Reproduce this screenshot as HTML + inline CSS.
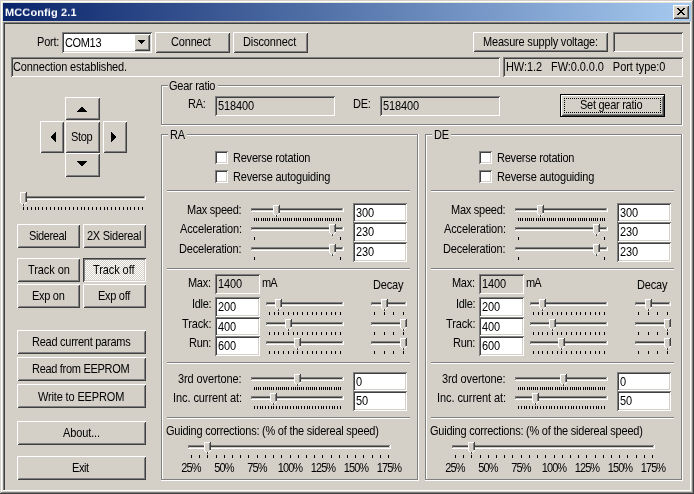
<!DOCTYPE html>
<html><head><meta charset="utf-8"><title>MCConfig 2.1</title><style>
html,body{margin:0;padding:0;}
body{width:694px;height:494px;overflow:hidden;background:#D4D0C8;position:relative;font-family:"Liberation Sans",sans-serif;font-size:11px;color:#000;line-height:13px;}
#w{position:absolute;left:0;top:0;width:694px;height:494px;overflow:hidden;}
#w div,#w svg,#w span.t{position:absolute;box-sizing:border-box;}
#w span.t{white-space:pre;will-change:transform;transform:scaleY(1.08);transform-origin:50% 15%;}
#w .btn>span,#w .sunk>span,#w .sunkbtn>span{display:inline-block;will-change:transform;transform:scaleY(1.08);transform-origin:50% 15%;}
#w .btn{background:#D4D0C8;display:flex;align-items:center;justify-content:center;white-space:pre;
 box-shadow:inset 1px 1px 0 #FFFFFF,inset -1px -1px 0 #404040,inset 2px 2px 0 #D4D0C8,inset -2px -2px 0 #808080;}
#w .sunk{display:flex;align-items:center;justify-content:flex-start;padding-left:3px;white-space:pre;
 box-shadow:inset 1px 1px 0 #808080,inset -1px -1px 0 #FFFFFF,inset 2px 2px 0 #404040,inset -2px -2px 0 #D4D0C8;}
#w .sunkbtn{display:flex;align-items:center;justify-content:center;white-space:pre;background-color:#EAE8E4;
 background-image:conic-gradient(#FFFFFF 25%,#D4D0C8 0 50%,#FFFFFF 0 75%,#D4D0C8 0);background-size:2px 2px;
 box-shadow:inset 1px 1px 0 #404040,inset -1px -1px 0 #FFFFFF,inset 2px 2px 0 #808080,inset -2px -2px 0 #D4D0C8;}
</style></head>
<body><div id="w">
<div style="left:0px;top:0px;width:694px;height:494px;background:#D4D0C8;"></div>
<div style="left:1px;top:1px;width:691px;height:1px;background:#FFFFFF;"></div>
<div style="left:1px;top:1px;width:1px;height:491px;background:#FFFFFF;"></div>
<div style="left:2px;top:2px;width:689px;height:1px;background:#E4E1DB;"></div>
<div style="left:2px;top:2px;width:1px;height:489px;background:#E4E1DB;"></div>
<div style="left:692px;top:1px;width:1px;height:492px;background:#808080;"></div>
<div style="left:1px;top:492px;width:692px;height:1px;background:#808080;"></div>
<div style="left:693px;top:0px;width:1px;height:494px;background:#404040;"></div>
<div style="left:0px;top:493px;width:694px;height:1px;background:#404040;"></div>
<div style="left:3px;top:3px;width:688px;height:18px;background:linear-gradient(to right,#0A246A,#A6CAF0);"></div>
<span class="t" style="left:5px;top:6px;color:#fff;font-weight:bold;letter-spacing:0.12px;transform:scaleY(0.93);transform-origin:50% 77%">MCConfig 2.1</span>
<div class="btn " style="left:673px;top:5px;width:16px;height:14px;"></div>
<svg style="left:677px;top:8px" width="8" height="7" viewBox="0 0 8 7" shape-rendering="crispEdges"><rect x="0" y="0" width="2" height="1" fill="#000000"/><rect x="6" y="0" width="2" height="1" fill="#000000"/><rect x="1" y="1" width="2" height="1" fill="#000000"/><rect x="5" y="1" width="2" height="1" fill="#000000"/><rect x="2" y="2" width="4" height="1" fill="#000000"/><rect x="3" y="3" width="2" height="1" fill="#000000"/><rect x="2" y="4" width="4" height="1" fill="#000000"/><rect x="1" y="5" width="2" height="1" fill="#000000"/><rect x="5" y="5" width="2" height="1" fill="#000000"/><rect x="0" y="6" width="2" height="1" fill="#000000"/><rect x="6" y="6" width="2" height="1" fill="#000000"/></svg>
<div style="left:3px;top:22px;width:688px;height:1px;background:#808080;"></div>
<div style="left:3px;top:22px;width:1px;height:469px;background:#808080;"></div>
<div style="left:4px;top:23px;width:686px;height:1px;background:#404040;"></div>
<div style="left:4px;top:23px;width:1px;height:467px;background:#404040;"></div>
<div style="left:690px;top:22px;width:1px;height:469px;background:#FFFFFF;"></div>
<div style="left:3px;top:490px;width:688px;height:1px;background:#FFFFFF;"></div>
<span class="t" style="top:35px;letter-spacing:-0.2px;left:37px;">Port:</span>
<div class="sunk" style="left:62px;top:32px;width:90px;height:21px;background-color:#FFFFFF;padding-left:3px;"><span style="letter-spacing:-0.35px">COM13</span></div>
<div class="btn " style="left:134px;top:34px;width:16px;height:17px;"></div>
<svg style="left:138px;top:40px" width="7" height="4" viewBox="0 0 7 4" shape-rendering="crispEdges"><rect x="0" y="0" width="7" height="1" fill="#000000"/><rect x="1" y="1" width="5" height="1" fill="#000000"/><rect x="2" y="2" width="3" height="1" fill="#000000"/><rect x="3" y="3" width="1" height="1" fill="#000000"/></svg>
<div class="btn " style="left:155px;top:32px;width:75px;height:21px;"><span style="letter-spacing:-0.18px;position:relative;top:-1px;left:-2px">Connect</span></div>
<div class="btn " style="left:233px;top:32px;width:75px;height:21px;"><span style="letter-spacing:-0.13px;position:relative;top:-1px;left:-1px">Disconnect</span></div>
<div class="btn " style="left:473px;top:32px;width:135px;height:20px;"><span style="letter-spacing:-0.19px;position:relative;top:-1px;left:0px">Measure supply voltage:</span></div>
<div class="sunk" style="left:613px;top:32px;width:70px;height:20px;background-color:#D4D0C8;"></div>
<div class="sunk" style="left:11px;top:57px;width:489px;height:20px;background-color:#D4D0C8;padding-left:2px;"><span style="letter-spacing:-0.15px;position:relative;top:-1px">Connection established.</span></div>
<div class="sunk" style="left:503px;top:57px;width:180px;height:20px;background-color:#D4D0C8;padding-left:3px;"><span style="letter-spacing:-0.07px;white-space:pre;position:relative;top:-1px">HW:1.2   FW:0.0.0.0   Port type:0</span></div>
<div style="left:161px;top:85px;width:7px;height:1px;background:#808080;"></div>
<div style="left:162px;top:86px;width:6px;height:1px;background:#FFFFFF;"></div>
<div style="left:218px;top:85px;width:464px;height:1px;background:#808080;"></div>
<div style="left:218px;top:86px;width:463px;height:1px;background:#FFFFFF;"></div>
<div style="left:161px;top:85px;width:1px;height:40px;background:#808080;"></div>
<div style="left:162px;top:86px;width:1px;height:38px;background:#FFFFFF;"></div>
<div style="left:161px;top:124px;width:521px;height:1px;background:#808080;"></div>
<div style="left:161px;top:125px;width:522px;height:1px;background:#FFFFFF;"></div>
<div style="left:681px;top:85px;width:1px;height:40px;background:#808080;"></div>
<div style="left:682px;top:85px;width:1px;height:41px;background:#FFFFFF;"></div>
<span class="t" style="top:79px;letter-spacing:-0.27px;left:169px;">Gear ratio</span>
<span class="t" style="top:97px;letter-spacing:-0.3px;left:188px;">RA:</span>
<div class="sunk" style="left:215px;top:96px;width:120px;height:20px;background-color:#D4D0C8;padding-left:3px;"><span style="letter-spacing:-0.1px;position:relative;top:-1px">518400</span></div>
<span class="t" style="top:97px;letter-spacing:-0.3px;left:353px;">DE:</span>
<div class="sunk" style="left:380px;top:96px;width:120px;height:20px;background-color:#D4D0C8;padding-left:3px;"><span style="letter-spacing:-0.1px;position:relative;top:-1px">518400</span></div>
<div style="left:560px;top:94px;width:105px;height:23px;background:#000000;"></div>
<div class="btn " style="left:561px;top:95px;width:103px;height:21px;"><span style="letter-spacing:-0.27px;position:relative;top:-1px;left:-1px">Set gear ratio</span></div>
<div style="left:564px;top:98px;width:97px;height:15px;border:1px dotted #000;box-sizing:border-box"></div>
<div class="btn " style="left:65px;top:97px;width:35px;height:23px;"></div>
<svg style="left:77px;top:107px" width="10" height="5" viewBox="0 0 10 5" shape-rendering="crispEdges"><rect x="4" y="0" width="2" height="1" fill="#000000"/><rect x="3" y="1" width="4" height="1" fill="#000000"/><rect x="2" y="2" width="6" height="1" fill="#000000"/><rect x="1" y="3" width="8" height="1" fill="#000000"/><rect x="0" y="4" width="10" height="1" fill="#000000"/></svg>
<div class="btn " style="left:40px;top:121px;width:24px;height:32px;"></div>
<svg style="left:51px;top:132px" width="5" height="10" viewBox="0 0 5 10" shape-rendering="crispEdges"><rect x="4" y="0" width="1" height="1" fill="#000000"/><rect x="3" y="1" width="2" height="1" fill="#000000"/><rect x="2" y="2" width="3" height="1" fill="#000000"/><rect x="1" y="3" width="4" height="1" fill="#000000"/><rect x="0" y="4" width="5" height="1" fill="#000000"/><rect x="0" y="5" width="5" height="1" fill="#000000"/><rect x="1" y="6" width="4" height="1" fill="#000000"/><rect x="2" y="7" width="3" height="1" fill="#000000"/><rect x="3" y="8" width="2" height="1" fill="#000000"/><rect x="4" y="9" width="1" height="1" fill="#000000"/></svg>
<div class="btn " style="left:65px;top:121px;width:35px;height:32px;"><span style="letter-spacing:-0.35px;position:relative;top:-1px;left:-1px">Stop</span></div>
<div class="btn " style="left:103px;top:121px;width:24px;height:32px;"></div>
<svg style="left:111px;top:132px" width="5" height="10" viewBox="0 0 5 10" shape-rendering="crispEdges"><rect x="0" y="0" width="1" height="1" fill="#000000"/><rect x="0" y="1" width="2" height="1" fill="#000000"/><rect x="0" y="2" width="3" height="1" fill="#000000"/><rect x="0" y="3" width="4" height="1" fill="#000000"/><rect x="0" y="4" width="5" height="1" fill="#000000"/><rect x="0" y="5" width="5" height="1" fill="#000000"/><rect x="0" y="6" width="4" height="1" fill="#000000"/><rect x="0" y="7" width="3" height="1" fill="#000000"/><rect x="0" y="8" width="2" height="1" fill="#000000"/><rect x="0" y="9" width="1" height="1" fill="#000000"/></svg>
<div class="btn " style="left:65px;top:153px;width:35px;height:24px;"></div>
<svg style="left:77px;top:161px" width="10" height="5" viewBox="0 0 10 5" shape-rendering="crispEdges"><rect x="0" y="0" width="10" height="1" fill="#000000"/><rect x="1" y="1" width="8" height="1" fill="#000000"/><rect x="2" y="2" width="6" height="1" fill="#000000"/><rect x="3" y="3" width="4" height="1" fill="#000000"/><rect x="4" y="4" width="2" height="1" fill="#000000"/></svg>
<div style="left:21px;top:196px;width:125px;height:1px;background:#808080;"></div>
<div style="left:21px;top:197px;width:124px;height:1px;background:#404040;"></div>
<div style="left:21px;top:198px;width:124px;height:1px;background:#D4D0C8;"></div>
<div style="left:21px;top:199px;width:125px;height:1px;background:#FFFFFF;"></div>
<div style="left:21px;top:196px;width:1px;height:3px;background:#808080;"></div>
<div style="left:145px;top:196px;width:1px;height:4px;background:#FFFFFF;"></div>
<div style="left:144px;top:197px;width:1px;height:2px;background:#D4D0C8;"></div>
<div style="left:23px;top:207px;width:1px;height:3px;background:#000000;"></div>
<div style="left:27px;top:207px;width:1px;height:3px;background:#000000;"></div>
<div style="left:31px;top:207px;width:1px;height:3px;background:#000000;"></div>
<div style="left:35px;top:207px;width:1px;height:3px;background:#000000;"></div>
<div style="left:38px;top:207px;width:1px;height:3px;background:#000000;"></div>
<div style="left:42px;top:207px;width:1px;height:3px;background:#000000;"></div>
<div style="left:46px;top:207px;width:1px;height:3px;background:#000000;"></div>
<div style="left:50px;top:207px;width:1px;height:3px;background:#000000;"></div>
<div style="left:54px;top:207px;width:1px;height:3px;background:#000000;"></div>
<div style="left:58px;top:207px;width:1px;height:3px;background:#000000;"></div>
<div style="left:61px;top:207px;width:1px;height:3px;background:#000000;"></div>
<div style="left:65px;top:207px;width:1px;height:3px;background:#000000;"></div>
<div style="left:69px;top:207px;width:1px;height:3px;background:#000000;"></div>
<div style="left:73px;top:207px;width:1px;height:3px;background:#000000;"></div>
<div style="left:77px;top:207px;width:1px;height:3px;background:#000000;"></div>
<div style="left:81px;top:207px;width:1px;height:3px;background:#000000;"></div>
<div style="left:84px;top:207px;width:1px;height:3px;background:#000000;"></div>
<div style="left:88px;top:207px;width:1px;height:3px;background:#000000;"></div>
<div style="left:92px;top:207px;width:1px;height:3px;background:#000000;"></div>
<div style="left:96px;top:207px;width:1px;height:3px;background:#000000;"></div>
<div style="left:100px;top:207px;width:1px;height:3px;background:#000000;"></div>
<div style="left:104px;top:207px;width:1px;height:3px;background:#000000;"></div>
<div style="left:107px;top:207px;width:1px;height:3px;background:#000000;"></div>
<div style="left:111px;top:207px;width:1px;height:3px;background:#000000;"></div>
<div style="left:115px;top:207px;width:1px;height:3px;background:#000000;"></div>
<div style="left:119px;top:207px;width:1px;height:3px;background:#000000;"></div>
<div style="left:123px;top:207px;width:1px;height:3px;background:#000000;"></div>
<div style="left:127px;top:207px;width:1px;height:3px;background:#000000;"></div>
<div style="left:130px;top:207px;width:1px;height:3px;background:#000000;"></div>
<div style="left:134px;top:207px;width:1px;height:3px;background:#000000;"></div>
<div style="left:138px;top:207px;width:1px;height:3px;background:#000000;"></div>
<div style="left:142px;top:207px;width:1px;height:3px;background:#000000;"></div>
<svg style="left:20px;top:192px" width="7" height="14" viewBox="0 0 7 14" shape-rendering="crispEdges"><rect x="0" y="0" width="6" height="1" fill="#FFFFFF"/><rect x="6" y="0" width="1" height="1" fill="#404040"/><rect x="0" y="1" width="1" height="1" fill="#FFFFFF"/><rect x="1" y="1" width="4" height="1" fill="#D4D0C8"/><rect x="5" y="1" width="1" height="1" fill="#808080"/><rect x="6" y="1" width="1" height="1" fill="#404040"/><rect x="0" y="2" width="1" height="1" fill="#FFFFFF"/><rect x="1" y="2" width="4" height="1" fill="#D4D0C8"/><rect x="5" y="2" width="1" height="1" fill="#808080"/><rect x="6" y="2" width="1" height="1" fill="#404040"/><rect x="0" y="3" width="1" height="1" fill="#FFFFFF"/><rect x="1" y="3" width="4" height="1" fill="#D4D0C8"/><rect x="5" y="3" width="1" height="1" fill="#808080"/><rect x="6" y="3" width="1" height="1" fill="#404040"/><rect x="0" y="4" width="1" height="1" fill="#FFFFFF"/><rect x="1" y="4" width="4" height="1" fill="#D4D0C8"/><rect x="5" y="4" width="1" height="1" fill="#808080"/><rect x="6" y="4" width="1" height="1" fill="#404040"/><rect x="0" y="5" width="1" height="1" fill="#FFFFFF"/><rect x="1" y="5" width="4" height="1" fill="#D4D0C8"/><rect x="5" y="5" width="1" height="1" fill="#808080"/><rect x="6" y="5" width="1" height="1" fill="#404040"/><rect x="0" y="6" width="1" height="1" fill="#FFFFFF"/><rect x="1" y="6" width="4" height="1" fill="#D4D0C8"/><rect x="5" y="6" width="1" height="1" fill="#808080"/><rect x="6" y="6" width="1" height="1" fill="#404040"/><rect x="0" y="7" width="1" height="1" fill="#FFFFFF"/><rect x="1" y="7" width="4" height="1" fill="#D4D0C8"/><rect x="5" y="7" width="1" height="1" fill="#808080"/><rect x="6" y="7" width="1" height="1" fill="#404040"/><rect x="0" y="8" width="1" height="1" fill="#FFFFFF"/><rect x="1" y="8" width="4" height="1" fill="#D4D0C8"/><rect x="5" y="8" width="1" height="1" fill="#808080"/><rect x="6" y="8" width="1" height="1" fill="#404040"/><rect x="0" y="9" width="1" height="1" fill="#FFFFFF"/><rect x="1" y="9" width="4" height="1" fill="#D4D0C8"/><rect x="5" y="9" width="1" height="1" fill="#808080"/><rect x="6" y="9" width="1" height="1" fill="#404040"/><rect x="0" y="10" width="1" height="1" fill="#FFFFFF"/><rect x="1" y="10" width="5" height="1" fill="#D4D0C8"/><rect x="6" y="10" width="1" height="1" fill="#FFFFFF"/><rect x="1" y="11" width="1" height="1" fill="#FFFFFF"/><rect x="2" y="11" width="3" height="1" fill="#D4D0C8"/><rect x="5" y="11" width="1" height="1" fill="#FFFFFF"/><rect x="2" y="12" width="1" height="1" fill="#FFFFFF"/><rect x="3" y="12" width="1" height="1" fill="#404040"/><rect x="4" y="12" width="1" height="1" fill="#FFFFFF"/><rect x="3" y="13" width="1" height="1" fill="#404040"/></svg>
<div class="btn " style="left:17px;top:224px;width:63px;height:24px;"><span style="letter-spacing:-0.38px;position:relative;top:-1px;left:-1px">Sidereal</span></div>
<div class="btn " style="left:83px;top:224px;width:63px;height:24px;"><span style="letter-spacing:-0.25px;position:relative;top:-1px;left:0px">2X Sidereal</span></div>
<div class="btn " style="left:17px;top:258px;width:63px;height:24px;"><span style="letter-spacing:-0.08px;position:relative;top:-1px;left:0px">Track on</span></div>
<div class="sunkbtn" style="left:83px;top:258px;width:63px;height:24px"><span style="letter-spacing:-0.09px;position:relative;left:-1px;top:-1px">Track off</span></div>
<div class="btn " style="left:17px;top:284px;width:63px;height:24px;"><span style="letter-spacing:-0.3px;position:relative;top:-1px;left:0px">Exp on</span></div>
<div class="btn " style="left:83px;top:284px;width:63px;height:24px;"><span style="letter-spacing:-0.3px;position:relative;top:-1px;left:-1px">Exp off</span></div>
<div class="btn " style="left:17px;top:330px;width:129px;height:24px;"><span style="letter-spacing:-0.26px;position:relative;top:-1px;left:0px">Read current params</span></div>
<div class="btn " style="left:17px;top:357px;width:129px;height:24px;"><span style="letter-spacing:-0.3px;position:relative;top:-1px;left:-1px">Read from EEPROM</span></div>
<div class="btn " style="left:17px;top:384px;width:129px;height:24px;"><span style="letter-spacing:-0.15px;position:relative;top:0px;left:0px">Write to EEPROM</span></div>
<div class="btn " style="left:17px;top:421px;width:129px;height:24px;"><span style="letter-spacing:-0.12px;position:relative;top:-1px;left:0px">About...</span></div>
<div class="btn " style="left:17px;top:456px;width:129px;height:24px;"><span style="letter-spacing:-0.4px;position:relative;top:-1px;left:-1px">Exit</span></div>
<div style="left:161px;top:134px;width:7px;height:1px;background:#808080;"></div>
<div style="left:162px;top:135px;width:6px;height:1px;background:#FFFFFF;"></div>
<div style="left:187px;top:134px;width:231px;height:1px;background:#808080;"></div>
<div style="left:187px;top:135px;width:230px;height:1px;background:#FFFFFF;"></div>
<div style="left:161px;top:134px;width:1px;height:346px;background:#808080;"></div>
<div style="left:162px;top:135px;width:1px;height:344px;background:#FFFFFF;"></div>
<div style="left:161px;top:479px;width:257px;height:1px;background:#808080;"></div>
<div style="left:161px;top:480px;width:258px;height:1px;background:#FFFFFF;"></div>
<div style="left:417px;top:134px;width:1px;height:346px;background:#808080;"></div>
<div style="left:418px;top:134px;width:1px;height:347px;background:#FFFFFF;"></div>
<span class="t" style="top:128px;letter-spacing:-0.29px;left:170px;">RA</span>
<div class="sunk" style="left:215px;top:151px;width:13px;height:13px;background-color:#FFFFFF;"></div>
<span class="t" style="top:151px;letter-spacing:-0.22px;left:233px;">Reverse rotation</span>
<div class="sunk" style="left:215px;top:170px;width:13px;height:13px;background-color:#FFFFFF;"></div>
<span class="t" style="top:170px;letter-spacing:-0.2px;left:233px;">Reverse autoguiding</span>
<div style="left:167px;top:190px;width:243px;height:1px;background:#808080;"></div>
<div style="left:167px;top:191px;width:243px;height:1px;background:#FFFFFF;"></div>
<span class="t" style="top:203px;letter-spacing:-0.25px;right:452.5px;text-align:right;">Max speed:</span>
<span class="t" style="top:222px;letter-spacing:-0.12px;right:451.5px;text-align:right;">Acceleration:</span>
<span class="t" style="top:242px;letter-spacing:-0.19px;right:452.5px;text-align:right;">Deceleration:</span>
<div style="left:251px;top:208px;width:93px;height:1px;background:#808080;"></div>
<div style="left:251px;top:209px;width:92px;height:1px;background:#404040;"></div>
<div style="left:251px;top:210px;width:92px;height:1px;background:#D4D0C8;"></div>
<div style="left:251px;top:211px;width:93px;height:1px;background:#FFFFFF;"></div>
<div style="left:251px;top:208px;width:1px;height:3px;background:#808080;"></div>
<div style="left:343px;top:208px;width:1px;height:4px;background:#FFFFFF;"></div>
<div style="left:342px;top:209px;width:1px;height:2px;background:#D4D0C8;"></div>
<div style="left:254px;top:218px;width:1px;height:3px;background:#000000;"></div>
<div style="left:256px;top:218px;width:1px;height:3px;background:#000000;"></div>
<div style="left:258px;top:218px;width:1px;height:3px;background:#000000;"></div>
<div style="left:261px;top:218px;width:1px;height:3px;background:#000000;"></div>
<div style="left:263px;top:218px;width:1px;height:3px;background:#000000;"></div>
<div style="left:265px;top:218px;width:1px;height:3px;background:#000000;"></div>
<div style="left:267px;top:218px;width:1px;height:3px;background:#000000;"></div>
<div style="left:269px;top:218px;width:1px;height:3px;background:#000000;"></div>
<div style="left:272px;top:218px;width:1px;height:3px;background:#000000;"></div>
<div style="left:274px;top:218px;width:1px;height:3px;background:#000000;"></div>
<div style="left:276px;top:218px;width:1px;height:3px;background:#000000;"></div>
<div style="left:278px;top:218px;width:1px;height:3px;background:#000000;"></div>
<div style="left:280px;top:218px;width:1px;height:3px;background:#000000;"></div>
<div style="left:283px;top:218px;width:1px;height:3px;background:#000000;"></div>
<div style="left:285px;top:218px;width:1px;height:3px;background:#000000;"></div>
<div style="left:287px;top:218px;width:1px;height:3px;background:#000000;"></div>
<div style="left:289px;top:218px;width:1px;height:3px;background:#000000;"></div>
<div style="left:291px;top:218px;width:1px;height:3px;background:#000000;"></div>
<div style="left:294px;top:218px;width:1px;height:3px;background:#000000;"></div>
<div style="left:296px;top:218px;width:1px;height:3px;background:#000000;"></div>
<div style="left:298px;top:218px;width:1px;height:3px;background:#000000;"></div>
<div style="left:300px;top:218px;width:1px;height:3px;background:#000000;"></div>
<div style="left:303px;top:218px;width:1px;height:3px;background:#000000;"></div>
<div style="left:305px;top:218px;width:1px;height:3px;background:#000000;"></div>
<div style="left:307px;top:218px;width:1px;height:3px;background:#000000;"></div>
<div style="left:309px;top:218px;width:1px;height:3px;background:#000000;"></div>
<div style="left:311px;top:218px;width:1px;height:3px;background:#000000;"></div>
<div style="left:314px;top:218px;width:1px;height:3px;background:#000000;"></div>
<div style="left:316px;top:218px;width:1px;height:3px;background:#000000;"></div>
<div style="left:318px;top:218px;width:1px;height:3px;background:#000000;"></div>
<div style="left:320px;top:218px;width:1px;height:3px;background:#000000;"></div>
<div style="left:322px;top:218px;width:1px;height:3px;background:#000000;"></div>
<div style="left:325px;top:218px;width:1px;height:3px;background:#000000;"></div>
<div style="left:327px;top:218px;width:1px;height:3px;background:#000000;"></div>
<div style="left:329px;top:218px;width:1px;height:3px;background:#000000;"></div>
<div style="left:331px;top:218px;width:1px;height:3px;background:#000000;"></div>
<div style="left:333px;top:218px;width:1px;height:3px;background:#000000;"></div>
<div style="left:336px;top:218px;width:1px;height:3px;background:#000000;"></div>
<div style="left:338px;top:218px;width:1px;height:3px;background:#000000;"></div>
<div style="left:340px;top:218px;width:1px;height:3px;background:#000000;"></div>
<svg style="left:273px;top:205px" width="7" height="12" viewBox="0 0 7 12" shape-rendering="crispEdges"><rect x="0" y="0" width="6" height="1" fill="#FFFFFF"/><rect x="6" y="0" width="1" height="1" fill="#404040"/><rect x="0" y="1" width="1" height="1" fill="#FFFFFF"/><rect x="1" y="1" width="4" height="1" fill="#D4D0C8"/><rect x="5" y="1" width="1" height="1" fill="#808080"/><rect x="6" y="1" width="1" height="1" fill="#404040"/><rect x="0" y="2" width="1" height="1" fill="#FFFFFF"/><rect x="1" y="2" width="4" height="1" fill="#D4D0C8"/><rect x="5" y="2" width="1" height="1" fill="#808080"/><rect x="6" y="2" width="1" height="1" fill="#404040"/><rect x="0" y="3" width="1" height="1" fill="#FFFFFF"/><rect x="1" y="3" width="4" height="1" fill="#D4D0C8"/><rect x="5" y="3" width="1" height="1" fill="#808080"/><rect x="6" y="3" width="1" height="1" fill="#404040"/><rect x="0" y="4" width="1" height="1" fill="#FFFFFF"/><rect x="1" y="4" width="4" height="1" fill="#D4D0C8"/><rect x="5" y="4" width="1" height="1" fill="#808080"/><rect x="6" y="4" width="1" height="1" fill="#404040"/><rect x="0" y="5" width="1" height="1" fill="#FFFFFF"/><rect x="1" y="5" width="4" height="1" fill="#D4D0C8"/><rect x="5" y="5" width="1" height="1" fill="#808080"/><rect x="6" y="5" width="1" height="1" fill="#404040"/><rect x="0" y="6" width="1" height="1" fill="#FFFFFF"/><rect x="1" y="6" width="4" height="1" fill="#D4D0C8"/><rect x="5" y="6" width="1" height="1" fill="#808080"/><rect x="6" y="6" width="1" height="1" fill="#404040"/><rect x="0" y="7" width="1" height="1" fill="#FFFFFF"/><rect x="1" y="7" width="4" height="1" fill="#D4D0C8"/><rect x="5" y="7" width="1" height="1" fill="#808080"/><rect x="6" y="7" width="1" height="1" fill="#404040"/><rect x="0" y="8" width="1" height="1" fill="#FFFFFF"/><rect x="1" y="8" width="5" height="1" fill="#D4D0C8"/><rect x="6" y="8" width="1" height="1" fill="#FFFFFF"/><rect x="1" y="9" width="1" height="1" fill="#FFFFFF"/><rect x="2" y="9" width="3" height="1" fill="#D4D0C8"/><rect x="5" y="9" width="1" height="1" fill="#FFFFFF"/><rect x="2" y="10" width="1" height="1" fill="#FFFFFF"/><rect x="3" y="10" width="1" height="1" fill="#404040"/><rect x="4" y="10" width="1" height="1" fill="#FFFFFF"/><rect x="3" y="11" width="1" height="1" fill="#404040"/></svg>
<div style="left:251px;top:227px;width:93px;height:1px;background:#808080;"></div>
<div style="left:251px;top:228px;width:92px;height:1px;background:#404040;"></div>
<div style="left:251px;top:229px;width:92px;height:1px;background:#D4D0C8;"></div>
<div style="left:251px;top:230px;width:93px;height:1px;background:#FFFFFF;"></div>
<div style="left:251px;top:227px;width:1px;height:3px;background:#808080;"></div>
<div style="left:343px;top:227px;width:1px;height:4px;background:#FFFFFF;"></div>
<div style="left:342px;top:228px;width:1px;height:2px;background:#D4D0C8;"></div>
<div style="left:254px;top:237px;width:1px;height:3px;background:#000000;"></div>
<div style="left:340px;top:237px;width:1px;height:3px;background:#000000;"></div>
<svg style="left:329px;top:224px" width="7" height="12" viewBox="0 0 7 12" shape-rendering="crispEdges"><rect x="0" y="0" width="6" height="1" fill="#FFFFFF"/><rect x="6" y="0" width="1" height="1" fill="#404040"/><rect x="0" y="1" width="1" height="1" fill="#FFFFFF"/><rect x="1" y="1" width="4" height="1" fill="#D4D0C8"/><rect x="5" y="1" width="1" height="1" fill="#808080"/><rect x="6" y="1" width="1" height="1" fill="#404040"/><rect x="0" y="2" width="1" height="1" fill="#FFFFFF"/><rect x="1" y="2" width="4" height="1" fill="#D4D0C8"/><rect x="5" y="2" width="1" height="1" fill="#808080"/><rect x="6" y="2" width="1" height="1" fill="#404040"/><rect x="0" y="3" width="1" height="1" fill="#FFFFFF"/><rect x="1" y="3" width="4" height="1" fill="#D4D0C8"/><rect x="5" y="3" width="1" height="1" fill="#808080"/><rect x="6" y="3" width="1" height="1" fill="#404040"/><rect x="0" y="4" width="1" height="1" fill="#FFFFFF"/><rect x="1" y="4" width="4" height="1" fill="#D4D0C8"/><rect x="5" y="4" width="1" height="1" fill="#808080"/><rect x="6" y="4" width="1" height="1" fill="#404040"/><rect x="0" y="5" width="1" height="1" fill="#FFFFFF"/><rect x="1" y="5" width="4" height="1" fill="#D4D0C8"/><rect x="5" y="5" width="1" height="1" fill="#808080"/><rect x="6" y="5" width="1" height="1" fill="#404040"/><rect x="0" y="6" width="1" height="1" fill="#FFFFFF"/><rect x="1" y="6" width="4" height="1" fill="#D4D0C8"/><rect x="5" y="6" width="1" height="1" fill="#808080"/><rect x="6" y="6" width="1" height="1" fill="#404040"/><rect x="0" y="7" width="1" height="1" fill="#FFFFFF"/><rect x="1" y="7" width="4" height="1" fill="#D4D0C8"/><rect x="5" y="7" width="1" height="1" fill="#808080"/><rect x="6" y="7" width="1" height="1" fill="#404040"/><rect x="0" y="8" width="1" height="1" fill="#FFFFFF"/><rect x="1" y="8" width="5" height="1" fill="#D4D0C8"/><rect x="6" y="8" width="1" height="1" fill="#FFFFFF"/><rect x="1" y="9" width="1" height="1" fill="#FFFFFF"/><rect x="2" y="9" width="3" height="1" fill="#D4D0C8"/><rect x="5" y="9" width="1" height="1" fill="#FFFFFF"/><rect x="2" y="10" width="1" height="1" fill="#FFFFFF"/><rect x="3" y="10" width="1" height="1" fill="#404040"/><rect x="4" y="10" width="1" height="1" fill="#FFFFFF"/><rect x="3" y="11" width="1" height="1" fill="#404040"/></svg>
<div style="left:251px;top:247px;width:93px;height:1px;background:#808080;"></div>
<div style="left:251px;top:248px;width:92px;height:1px;background:#404040;"></div>
<div style="left:251px;top:249px;width:92px;height:1px;background:#D4D0C8;"></div>
<div style="left:251px;top:250px;width:93px;height:1px;background:#FFFFFF;"></div>
<div style="left:251px;top:247px;width:1px;height:3px;background:#808080;"></div>
<div style="left:343px;top:247px;width:1px;height:4px;background:#FFFFFF;"></div>
<div style="left:342px;top:248px;width:1px;height:2px;background:#D4D0C8;"></div>
<div style="left:254px;top:257px;width:1px;height:3px;background:#000000;"></div>
<div style="left:340px;top:257px;width:1px;height:3px;background:#000000;"></div>
<svg style="left:329px;top:244px" width="7" height="12" viewBox="0 0 7 12" shape-rendering="crispEdges"><rect x="0" y="0" width="6" height="1" fill="#FFFFFF"/><rect x="6" y="0" width="1" height="1" fill="#404040"/><rect x="0" y="1" width="1" height="1" fill="#FFFFFF"/><rect x="1" y="1" width="4" height="1" fill="#D4D0C8"/><rect x="5" y="1" width="1" height="1" fill="#808080"/><rect x="6" y="1" width="1" height="1" fill="#404040"/><rect x="0" y="2" width="1" height="1" fill="#FFFFFF"/><rect x="1" y="2" width="4" height="1" fill="#D4D0C8"/><rect x="5" y="2" width="1" height="1" fill="#808080"/><rect x="6" y="2" width="1" height="1" fill="#404040"/><rect x="0" y="3" width="1" height="1" fill="#FFFFFF"/><rect x="1" y="3" width="4" height="1" fill="#D4D0C8"/><rect x="5" y="3" width="1" height="1" fill="#808080"/><rect x="6" y="3" width="1" height="1" fill="#404040"/><rect x="0" y="4" width="1" height="1" fill="#FFFFFF"/><rect x="1" y="4" width="4" height="1" fill="#D4D0C8"/><rect x="5" y="4" width="1" height="1" fill="#808080"/><rect x="6" y="4" width="1" height="1" fill="#404040"/><rect x="0" y="5" width="1" height="1" fill="#FFFFFF"/><rect x="1" y="5" width="4" height="1" fill="#D4D0C8"/><rect x="5" y="5" width="1" height="1" fill="#808080"/><rect x="6" y="5" width="1" height="1" fill="#404040"/><rect x="0" y="6" width="1" height="1" fill="#FFFFFF"/><rect x="1" y="6" width="4" height="1" fill="#D4D0C8"/><rect x="5" y="6" width="1" height="1" fill="#808080"/><rect x="6" y="6" width="1" height="1" fill="#404040"/><rect x="0" y="7" width="1" height="1" fill="#FFFFFF"/><rect x="1" y="7" width="4" height="1" fill="#D4D0C8"/><rect x="5" y="7" width="1" height="1" fill="#808080"/><rect x="6" y="7" width="1" height="1" fill="#404040"/><rect x="0" y="8" width="1" height="1" fill="#FFFFFF"/><rect x="1" y="8" width="5" height="1" fill="#D4D0C8"/><rect x="6" y="8" width="1" height="1" fill="#FFFFFF"/><rect x="1" y="9" width="1" height="1" fill="#FFFFFF"/><rect x="2" y="9" width="3" height="1" fill="#D4D0C8"/><rect x="5" y="9" width="1" height="1" fill="#FFFFFF"/><rect x="2" y="10" width="1" height="1" fill="#FFFFFF"/><rect x="3" y="10" width="1" height="1" fill="#404040"/><rect x="4" y="10" width="1" height="1" fill="#FFFFFF"/><rect x="3" y="11" width="1" height="1" fill="#404040"/></svg>
<div class="sunk" style="left:353px;top:203px;width:54px;height:19px;background-color:#FFFFFF;"><span style="letter-spacing:-0.1px;position:relative;top:0px">300</span></div>
<div class="sunk" style="left:353px;top:222px;width:54px;height:20px;background-color:#FFFFFF;"><span style="letter-spacing:-0.1px;position:relative;top:-1px">230</span></div>
<div class="sunk" style="left:353px;top:242px;width:54px;height:20px;background-color:#FFFFFF;"><span style="letter-spacing:-0.1px;position:relative;top:-1px">230</span></div>
<div style="left:167px;top:268px;width:243px;height:1px;background:#808080;"></div>
<div style="left:167px;top:269px;width:243px;height:1px;background:#FFFFFF;"></div>
<span class="t" style="top:276px;letter-spacing:-0.3px;right:483px;text-align:right;">Max:</span>
<span class="t" style="top:297px;letter-spacing:-0.3px;right:483px;text-align:right;">Idle:</span>
<span class="t" style="top:317px;letter-spacing:-0.14px;right:483px;text-align:right;">Track:</span>
<span class="t" style="top:336px;letter-spacing:-0.3px;right:483px;text-align:right;">Run:</span>
<div class="sunk" style="left:215px;top:274px;width:45px;height:20px;background-color:#D4D0C8;"><span style="letter-spacing:-0.1px;position:relative;top:-1px">1400</span></div>
<div class="sunk" style="left:215px;top:297px;width:45px;height:20px;background-color:#FFFFFF;"><span style="letter-spacing:-0.1px;position:relative;top:-1px">200</span></div>
<div class="sunk" style="left:215px;top:317px;width:45px;height:19px;background-color:#FFFFFF;"><span style="letter-spacing:-0.1px;position:relative;top:0px">400</span></div>
<div class="sunk" style="left:215px;top:336px;width:45px;height:20px;background-color:#FFFFFF;"><span style="letter-spacing:-0.1px;position:relative;top:-1px">600</span></div>
<span class="t" style="top:276px;letter-spacing:-0.9px;left:262px;">mA</span>
<span class="t" style="top:278px;letter-spacing:-0.18px;left:373px;">Decay</span>
<div style="left:266px;top:302px;width:78px;height:1px;background:#808080;"></div>
<div style="left:266px;top:303px;width:77px;height:1px;background:#404040;"></div>
<div style="left:266px;top:304px;width:77px;height:1px;background:#D4D0C8;"></div>
<div style="left:266px;top:305px;width:78px;height:1px;background:#FFFFFF;"></div>
<div style="left:266px;top:302px;width:1px;height:3px;background:#808080;"></div>
<div style="left:343px;top:302px;width:1px;height:4px;background:#FFFFFF;"></div>
<div style="left:342px;top:303px;width:1px;height:2px;background:#D4D0C8;"></div>
<div style="left:269px;top:312px;width:1px;height:3px;background:#000000;"></div>
<div style="left:274px;top:312px;width:1px;height:3px;background:#000000;"></div>
<div style="left:278px;top:312px;width:1px;height:3px;background:#000000;"></div>
<div style="left:283px;top:312px;width:1px;height:3px;background:#000000;"></div>
<div style="left:288px;top:312px;width:1px;height:3px;background:#000000;"></div>
<div style="left:293px;top:312px;width:1px;height:3px;background:#000000;"></div>
<div style="left:297px;top:312px;width:1px;height:3px;background:#000000;"></div>
<div style="left:302px;top:312px;width:1px;height:3px;background:#000000;"></div>
<div style="left:307px;top:312px;width:1px;height:3px;background:#000000;"></div>
<div style="left:312px;top:312px;width:1px;height:3px;background:#000000;"></div>
<div style="left:316px;top:312px;width:1px;height:3px;background:#000000;"></div>
<div style="left:321px;top:312px;width:1px;height:3px;background:#000000;"></div>
<div style="left:326px;top:312px;width:1px;height:3px;background:#000000;"></div>
<div style="left:331px;top:312px;width:1px;height:3px;background:#000000;"></div>
<div style="left:335px;top:312px;width:1px;height:3px;background:#000000;"></div>
<div style="left:340px;top:312px;width:1px;height:3px;background:#000000;"></div>
<svg style="left:275px;top:299px" width="7" height="12" viewBox="0 0 7 12" shape-rendering="crispEdges"><rect x="0" y="0" width="6" height="1" fill="#FFFFFF"/><rect x="6" y="0" width="1" height="1" fill="#404040"/><rect x="0" y="1" width="1" height="1" fill="#FFFFFF"/><rect x="1" y="1" width="4" height="1" fill="#D4D0C8"/><rect x="5" y="1" width="1" height="1" fill="#808080"/><rect x="6" y="1" width="1" height="1" fill="#404040"/><rect x="0" y="2" width="1" height="1" fill="#FFFFFF"/><rect x="1" y="2" width="4" height="1" fill="#D4D0C8"/><rect x="5" y="2" width="1" height="1" fill="#808080"/><rect x="6" y="2" width="1" height="1" fill="#404040"/><rect x="0" y="3" width="1" height="1" fill="#FFFFFF"/><rect x="1" y="3" width="4" height="1" fill="#D4D0C8"/><rect x="5" y="3" width="1" height="1" fill="#808080"/><rect x="6" y="3" width="1" height="1" fill="#404040"/><rect x="0" y="4" width="1" height="1" fill="#FFFFFF"/><rect x="1" y="4" width="4" height="1" fill="#D4D0C8"/><rect x="5" y="4" width="1" height="1" fill="#808080"/><rect x="6" y="4" width="1" height="1" fill="#404040"/><rect x="0" y="5" width="1" height="1" fill="#FFFFFF"/><rect x="1" y="5" width="4" height="1" fill="#D4D0C8"/><rect x="5" y="5" width="1" height="1" fill="#808080"/><rect x="6" y="5" width="1" height="1" fill="#404040"/><rect x="0" y="6" width="1" height="1" fill="#FFFFFF"/><rect x="1" y="6" width="4" height="1" fill="#D4D0C8"/><rect x="5" y="6" width="1" height="1" fill="#808080"/><rect x="6" y="6" width="1" height="1" fill="#404040"/><rect x="0" y="7" width="1" height="1" fill="#FFFFFF"/><rect x="1" y="7" width="4" height="1" fill="#D4D0C8"/><rect x="5" y="7" width="1" height="1" fill="#808080"/><rect x="6" y="7" width="1" height="1" fill="#404040"/><rect x="0" y="8" width="1" height="1" fill="#FFFFFF"/><rect x="1" y="8" width="5" height="1" fill="#D4D0C8"/><rect x="6" y="8" width="1" height="1" fill="#FFFFFF"/><rect x="1" y="9" width="1" height="1" fill="#FFFFFF"/><rect x="2" y="9" width="3" height="1" fill="#D4D0C8"/><rect x="5" y="9" width="1" height="1" fill="#FFFFFF"/><rect x="2" y="10" width="1" height="1" fill="#FFFFFF"/><rect x="3" y="10" width="1" height="1" fill="#404040"/><rect x="4" y="10" width="1" height="1" fill="#FFFFFF"/><rect x="3" y="11" width="1" height="1" fill="#404040"/></svg>
<div style="left:266px;top:322px;width:78px;height:1px;background:#808080;"></div>
<div style="left:266px;top:323px;width:77px;height:1px;background:#404040;"></div>
<div style="left:266px;top:324px;width:77px;height:1px;background:#D4D0C8;"></div>
<div style="left:266px;top:325px;width:78px;height:1px;background:#FFFFFF;"></div>
<div style="left:266px;top:322px;width:1px;height:3px;background:#808080;"></div>
<div style="left:343px;top:322px;width:1px;height:4px;background:#FFFFFF;"></div>
<div style="left:342px;top:323px;width:1px;height:2px;background:#D4D0C8;"></div>
<div style="left:269px;top:332px;width:1px;height:3px;background:#000000;"></div>
<div style="left:274px;top:332px;width:1px;height:3px;background:#000000;"></div>
<div style="left:278px;top:332px;width:1px;height:3px;background:#000000;"></div>
<div style="left:283px;top:332px;width:1px;height:3px;background:#000000;"></div>
<div style="left:288px;top:332px;width:1px;height:3px;background:#000000;"></div>
<div style="left:293px;top:332px;width:1px;height:3px;background:#000000;"></div>
<div style="left:297px;top:332px;width:1px;height:3px;background:#000000;"></div>
<div style="left:302px;top:332px;width:1px;height:3px;background:#000000;"></div>
<div style="left:307px;top:332px;width:1px;height:3px;background:#000000;"></div>
<div style="left:312px;top:332px;width:1px;height:3px;background:#000000;"></div>
<div style="left:316px;top:332px;width:1px;height:3px;background:#000000;"></div>
<div style="left:321px;top:332px;width:1px;height:3px;background:#000000;"></div>
<div style="left:326px;top:332px;width:1px;height:3px;background:#000000;"></div>
<div style="left:331px;top:332px;width:1px;height:3px;background:#000000;"></div>
<div style="left:335px;top:332px;width:1px;height:3px;background:#000000;"></div>
<div style="left:340px;top:332px;width:1px;height:3px;background:#000000;"></div>
<svg style="left:285px;top:319px" width="7" height="12" viewBox="0 0 7 12" shape-rendering="crispEdges"><rect x="0" y="0" width="6" height="1" fill="#FFFFFF"/><rect x="6" y="0" width="1" height="1" fill="#404040"/><rect x="0" y="1" width="1" height="1" fill="#FFFFFF"/><rect x="1" y="1" width="4" height="1" fill="#D4D0C8"/><rect x="5" y="1" width="1" height="1" fill="#808080"/><rect x="6" y="1" width="1" height="1" fill="#404040"/><rect x="0" y="2" width="1" height="1" fill="#FFFFFF"/><rect x="1" y="2" width="4" height="1" fill="#D4D0C8"/><rect x="5" y="2" width="1" height="1" fill="#808080"/><rect x="6" y="2" width="1" height="1" fill="#404040"/><rect x="0" y="3" width="1" height="1" fill="#FFFFFF"/><rect x="1" y="3" width="4" height="1" fill="#D4D0C8"/><rect x="5" y="3" width="1" height="1" fill="#808080"/><rect x="6" y="3" width="1" height="1" fill="#404040"/><rect x="0" y="4" width="1" height="1" fill="#FFFFFF"/><rect x="1" y="4" width="4" height="1" fill="#D4D0C8"/><rect x="5" y="4" width="1" height="1" fill="#808080"/><rect x="6" y="4" width="1" height="1" fill="#404040"/><rect x="0" y="5" width="1" height="1" fill="#FFFFFF"/><rect x="1" y="5" width="4" height="1" fill="#D4D0C8"/><rect x="5" y="5" width="1" height="1" fill="#808080"/><rect x="6" y="5" width="1" height="1" fill="#404040"/><rect x="0" y="6" width="1" height="1" fill="#FFFFFF"/><rect x="1" y="6" width="4" height="1" fill="#D4D0C8"/><rect x="5" y="6" width="1" height="1" fill="#808080"/><rect x="6" y="6" width="1" height="1" fill="#404040"/><rect x="0" y="7" width="1" height="1" fill="#FFFFFF"/><rect x="1" y="7" width="4" height="1" fill="#D4D0C8"/><rect x="5" y="7" width="1" height="1" fill="#808080"/><rect x="6" y="7" width="1" height="1" fill="#404040"/><rect x="0" y="8" width="1" height="1" fill="#FFFFFF"/><rect x="1" y="8" width="5" height="1" fill="#D4D0C8"/><rect x="6" y="8" width="1" height="1" fill="#FFFFFF"/><rect x="1" y="9" width="1" height="1" fill="#FFFFFF"/><rect x="2" y="9" width="3" height="1" fill="#D4D0C8"/><rect x="5" y="9" width="1" height="1" fill="#FFFFFF"/><rect x="2" y="10" width="1" height="1" fill="#FFFFFF"/><rect x="3" y="10" width="1" height="1" fill="#404040"/><rect x="4" y="10" width="1" height="1" fill="#FFFFFF"/><rect x="3" y="11" width="1" height="1" fill="#404040"/></svg>
<div style="left:266px;top:341px;width:78px;height:1px;background:#808080;"></div>
<div style="left:266px;top:342px;width:77px;height:1px;background:#404040;"></div>
<div style="left:266px;top:343px;width:77px;height:1px;background:#D4D0C8;"></div>
<div style="left:266px;top:344px;width:78px;height:1px;background:#FFFFFF;"></div>
<div style="left:266px;top:341px;width:1px;height:3px;background:#808080;"></div>
<div style="left:343px;top:341px;width:1px;height:4px;background:#FFFFFF;"></div>
<div style="left:342px;top:342px;width:1px;height:2px;background:#D4D0C8;"></div>
<div style="left:269px;top:351px;width:1px;height:3px;background:#000000;"></div>
<div style="left:274px;top:351px;width:1px;height:3px;background:#000000;"></div>
<div style="left:278px;top:351px;width:1px;height:3px;background:#000000;"></div>
<div style="left:283px;top:351px;width:1px;height:3px;background:#000000;"></div>
<div style="left:288px;top:351px;width:1px;height:3px;background:#000000;"></div>
<div style="left:293px;top:351px;width:1px;height:3px;background:#000000;"></div>
<div style="left:297px;top:351px;width:1px;height:3px;background:#000000;"></div>
<div style="left:302px;top:351px;width:1px;height:3px;background:#000000;"></div>
<div style="left:307px;top:351px;width:1px;height:3px;background:#000000;"></div>
<div style="left:312px;top:351px;width:1px;height:3px;background:#000000;"></div>
<div style="left:316px;top:351px;width:1px;height:3px;background:#000000;"></div>
<div style="left:321px;top:351px;width:1px;height:3px;background:#000000;"></div>
<div style="left:326px;top:351px;width:1px;height:3px;background:#000000;"></div>
<div style="left:331px;top:351px;width:1px;height:3px;background:#000000;"></div>
<div style="left:335px;top:351px;width:1px;height:3px;background:#000000;"></div>
<div style="left:340px;top:351px;width:1px;height:3px;background:#000000;"></div>
<svg style="left:294px;top:338px" width="7" height="12" viewBox="0 0 7 12" shape-rendering="crispEdges"><rect x="0" y="0" width="6" height="1" fill="#FFFFFF"/><rect x="6" y="0" width="1" height="1" fill="#404040"/><rect x="0" y="1" width="1" height="1" fill="#FFFFFF"/><rect x="1" y="1" width="4" height="1" fill="#D4D0C8"/><rect x="5" y="1" width="1" height="1" fill="#808080"/><rect x="6" y="1" width="1" height="1" fill="#404040"/><rect x="0" y="2" width="1" height="1" fill="#FFFFFF"/><rect x="1" y="2" width="4" height="1" fill="#D4D0C8"/><rect x="5" y="2" width="1" height="1" fill="#808080"/><rect x="6" y="2" width="1" height="1" fill="#404040"/><rect x="0" y="3" width="1" height="1" fill="#FFFFFF"/><rect x="1" y="3" width="4" height="1" fill="#D4D0C8"/><rect x="5" y="3" width="1" height="1" fill="#808080"/><rect x="6" y="3" width="1" height="1" fill="#404040"/><rect x="0" y="4" width="1" height="1" fill="#FFFFFF"/><rect x="1" y="4" width="4" height="1" fill="#D4D0C8"/><rect x="5" y="4" width="1" height="1" fill="#808080"/><rect x="6" y="4" width="1" height="1" fill="#404040"/><rect x="0" y="5" width="1" height="1" fill="#FFFFFF"/><rect x="1" y="5" width="4" height="1" fill="#D4D0C8"/><rect x="5" y="5" width="1" height="1" fill="#808080"/><rect x="6" y="5" width="1" height="1" fill="#404040"/><rect x="0" y="6" width="1" height="1" fill="#FFFFFF"/><rect x="1" y="6" width="4" height="1" fill="#D4D0C8"/><rect x="5" y="6" width="1" height="1" fill="#808080"/><rect x="6" y="6" width="1" height="1" fill="#404040"/><rect x="0" y="7" width="1" height="1" fill="#FFFFFF"/><rect x="1" y="7" width="4" height="1" fill="#D4D0C8"/><rect x="5" y="7" width="1" height="1" fill="#808080"/><rect x="6" y="7" width="1" height="1" fill="#404040"/><rect x="0" y="8" width="1" height="1" fill="#FFFFFF"/><rect x="1" y="8" width="5" height="1" fill="#D4D0C8"/><rect x="6" y="8" width="1" height="1" fill="#FFFFFF"/><rect x="1" y="9" width="1" height="1" fill="#FFFFFF"/><rect x="2" y="9" width="3" height="1" fill="#D4D0C8"/><rect x="5" y="9" width="1" height="1" fill="#FFFFFF"/><rect x="2" y="10" width="1" height="1" fill="#FFFFFF"/><rect x="3" y="10" width="1" height="1" fill="#404040"/><rect x="4" y="10" width="1" height="1" fill="#FFFFFF"/><rect x="3" y="11" width="1" height="1" fill="#404040"/></svg>
<div style="left:371px;top:302px;width:36px;height:1px;background:#808080;"></div>
<div style="left:371px;top:303px;width:35px;height:1px;background:#404040;"></div>
<div style="left:371px;top:304px;width:35px;height:1px;background:#D4D0C8;"></div>
<div style="left:371px;top:305px;width:36px;height:1px;background:#FFFFFF;"></div>
<div style="left:371px;top:302px;width:1px;height:3px;background:#808080;"></div>
<div style="left:406px;top:302px;width:1px;height:4px;background:#FFFFFF;"></div>
<div style="left:405px;top:303px;width:1px;height:2px;background:#D4D0C8;"></div>
<div style="left:374px;top:312px;width:1px;height:3px;background:#000000;"></div>
<div style="left:384px;top:312px;width:1px;height:3px;background:#000000;"></div>
<div style="left:393px;top:312px;width:1px;height:3px;background:#000000;"></div>
<div style="left:403px;top:312px;width:1px;height:3px;background:#000000;"></div>
<svg style="left:381px;top:299px" width="7" height="12" viewBox="0 0 7 12" shape-rendering="crispEdges"><rect x="0" y="0" width="6" height="1" fill="#FFFFFF"/><rect x="6" y="0" width="1" height="1" fill="#404040"/><rect x="0" y="1" width="1" height="1" fill="#FFFFFF"/><rect x="1" y="1" width="4" height="1" fill="#D4D0C8"/><rect x="5" y="1" width="1" height="1" fill="#808080"/><rect x="6" y="1" width="1" height="1" fill="#404040"/><rect x="0" y="2" width="1" height="1" fill="#FFFFFF"/><rect x="1" y="2" width="4" height="1" fill="#D4D0C8"/><rect x="5" y="2" width="1" height="1" fill="#808080"/><rect x="6" y="2" width="1" height="1" fill="#404040"/><rect x="0" y="3" width="1" height="1" fill="#FFFFFF"/><rect x="1" y="3" width="4" height="1" fill="#D4D0C8"/><rect x="5" y="3" width="1" height="1" fill="#808080"/><rect x="6" y="3" width="1" height="1" fill="#404040"/><rect x="0" y="4" width="1" height="1" fill="#FFFFFF"/><rect x="1" y="4" width="4" height="1" fill="#D4D0C8"/><rect x="5" y="4" width="1" height="1" fill="#808080"/><rect x="6" y="4" width="1" height="1" fill="#404040"/><rect x="0" y="5" width="1" height="1" fill="#FFFFFF"/><rect x="1" y="5" width="4" height="1" fill="#D4D0C8"/><rect x="5" y="5" width="1" height="1" fill="#808080"/><rect x="6" y="5" width="1" height="1" fill="#404040"/><rect x="0" y="6" width="1" height="1" fill="#FFFFFF"/><rect x="1" y="6" width="4" height="1" fill="#D4D0C8"/><rect x="5" y="6" width="1" height="1" fill="#808080"/><rect x="6" y="6" width="1" height="1" fill="#404040"/><rect x="0" y="7" width="1" height="1" fill="#FFFFFF"/><rect x="1" y="7" width="4" height="1" fill="#D4D0C8"/><rect x="5" y="7" width="1" height="1" fill="#808080"/><rect x="6" y="7" width="1" height="1" fill="#404040"/><rect x="0" y="8" width="1" height="1" fill="#FFFFFF"/><rect x="1" y="8" width="5" height="1" fill="#D4D0C8"/><rect x="6" y="8" width="1" height="1" fill="#FFFFFF"/><rect x="1" y="9" width="1" height="1" fill="#FFFFFF"/><rect x="2" y="9" width="3" height="1" fill="#D4D0C8"/><rect x="5" y="9" width="1" height="1" fill="#FFFFFF"/><rect x="2" y="10" width="1" height="1" fill="#FFFFFF"/><rect x="3" y="10" width="1" height="1" fill="#404040"/><rect x="4" y="10" width="1" height="1" fill="#FFFFFF"/><rect x="3" y="11" width="1" height="1" fill="#404040"/></svg>
<div style="left:371px;top:322px;width:36px;height:1px;background:#808080;"></div>
<div style="left:371px;top:323px;width:35px;height:1px;background:#404040;"></div>
<div style="left:371px;top:324px;width:35px;height:1px;background:#D4D0C8;"></div>
<div style="left:371px;top:325px;width:36px;height:1px;background:#FFFFFF;"></div>
<div style="left:371px;top:322px;width:1px;height:3px;background:#808080;"></div>
<div style="left:406px;top:322px;width:1px;height:4px;background:#FFFFFF;"></div>
<div style="left:405px;top:323px;width:1px;height:2px;background:#D4D0C8;"></div>
<div style="left:374px;top:332px;width:1px;height:3px;background:#000000;"></div>
<div style="left:384px;top:332px;width:1px;height:3px;background:#000000;"></div>
<div style="left:393px;top:332px;width:1px;height:3px;background:#000000;"></div>
<div style="left:403px;top:332px;width:1px;height:3px;background:#000000;"></div>
<svg style="left:400px;top:319px" width="7" height="12" viewBox="0 0 7 12" shape-rendering="crispEdges"><rect x="0" y="0" width="6" height="1" fill="#FFFFFF"/><rect x="6" y="0" width="1" height="1" fill="#404040"/><rect x="0" y="1" width="1" height="1" fill="#FFFFFF"/><rect x="1" y="1" width="4" height="1" fill="#D4D0C8"/><rect x="5" y="1" width="1" height="1" fill="#808080"/><rect x="6" y="1" width="1" height="1" fill="#404040"/><rect x="0" y="2" width="1" height="1" fill="#FFFFFF"/><rect x="1" y="2" width="4" height="1" fill="#D4D0C8"/><rect x="5" y="2" width="1" height="1" fill="#808080"/><rect x="6" y="2" width="1" height="1" fill="#404040"/><rect x="0" y="3" width="1" height="1" fill="#FFFFFF"/><rect x="1" y="3" width="4" height="1" fill="#D4D0C8"/><rect x="5" y="3" width="1" height="1" fill="#808080"/><rect x="6" y="3" width="1" height="1" fill="#404040"/><rect x="0" y="4" width="1" height="1" fill="#FFFFFF"/><rect x="1" y="4" width="4" height="1" fill="#D4D0C8"/><rect x="5" y="4" width="1" height="1" fill="#808080"/><rect x="6" y="4" width="1" height="1" fill="#404040"/><rect x="0" y="5" width="1" height="1" fill="#FFFFFF"/><rect x="1" y="5" width="4" height="1" fill="#D4D0C8"/><rect x="5" y="5" width="1" height="1" fill="#808080"/><rect x="6" y="5" width="1" height="1" fill="#404040"/><rect x="0" y="6" width="1" height="1" fill="#FFFFFF"/><rect x="1" y="6" width="4" height="1" fill="#D4D0C8"/><rect x="5" y="6" width="1" height="1" fill="#808080"/><rect x="6" y="6" width="1" height="1" fill="#404040"/><rect x="0" y="7" width="1" height="1" fill="#FFFFFF"/><rect x="1" y="7" width="4" height="1" fill="#D4D0C8"/><rect x="5" y="7" width="1" height="1" fill="#808080"/><rect x="6" y="7" width="1" height="1" fill="#404040"/><rect x="0" y="8" width="1" height="1" fill="#FFFFFF"/><rect x="1" y="8" width="5" height="1" fill="#D4D0C8"/><rect x="6" y="8" width="1" height="1" fill="#FFFFFF"/><rect x="1" y="9" width="1" height="1" fill="#FFFFFF"/><rect x="2" y="9" width="3" height="1" fill="#D4D0C8"/><rect x="5" y="9" width="1" height="1" fill="#FFFFFF"/><rect x="2" y="10" width="1" height="1" fill="#FFFFFF"/><rect x="3" y="10" width="1" height="1" fill="#404040"/><rect x="4" y="10" width="1" height="1" fill="#FFFFFF"/><rect x="3" y="11" width="1" height="1" fill="#404040"/></svg>
<div style="left:371px;top:341px;width:36px;height:1px;background:#808080;"></div>
<div style="left:371px;top:342px;width:35px;height:1px;background:#404040;"></div>
<div style="left:371px;top:343px;width:35px;height:1px;background:#D4D0C8;"></div>
<div style="left:371px;top:344px;width:36px;height:1px;background:#FFFFFF;"></div>
<div style="left:371px;top:341px;width:1px;height:3px;background:#808080;"></div>
<div style="left:406px;top:341px;width:1px;height:4px;background:#FFFFFF;"></div>
<div style="left:405px;top:342px;width:1px;height:2px;background:#D4D0C8;"></div>
<div style="left:374px;top:351px;width:1px;height:3px;background:#000000;"></div>
<div style="left:384px;top:351px;width:1px;height:3px;background:#000000;"></div>
<div style="left:393px;top:351px;width:1px;height:3px;background:#000000;"></div>
<div style="left:403px;top:351px;width:1px;height:3px;background:#000000;"></div>
<svg style="left:400px;top:338px" width="7" height="12" viewBox="0 0 7 12" shape-rendering="crispEdges"><rect x="0" y="0" width="6" height="1" fill="#FFFFFF"/><rect x="6" y="0" width="1" height="1" fill="#404040"/><rect x="0" y="1" width="1" height="1" fill="#FFFFFF"/><rect x="1" y="1" width="4" height="1" fill="#D4D0C8"/><rect x="5" y="1" width="1" height="1" fill="#808080"/><rect x="6" y="1" width="1" height="1" fill="#404040"/><rect x="0" y="2" width="1" height="1" fill="#FFFFFF"/><rect x="1" y="2" width="4" height="1" fill="#D4D0C8"/><rect x="5" y="2" width="1" height="1" fill="#808080"/><rect x="6" y="2" width="1" height="1" fill="#404040"/><rect x="0" y="3" width="1" height="1" fill="#FFFFFF"/><rect x="1" y="3" width="4" height="1" fill="#D4D0C8"/><rect x="5" y="3" width="1" height="1" fill="#808080"/><rect x="6" y="3" width="1" height="1" fill="#404040"/><rect x="0" y="4" width="1" height="1" fill="#FFFFFF"/><rect x="1" y="4" width="4" height="1" fill="#D4D0C8"/><rect x="5" y="4" width="1" height="1" fill="#808080"/><rect x="6" y="4" width="1" height="1" fill="#404040"/><rect x="0" y="5" width="1" height="1" fill="#FFFFFF"/><rect x="1" y="5" width="4" height="1" fill="#D4D0C8"/><rect x="5" y="5" width="1" height="1" fill="#808080"/><rect x="6" y="5" width="1" height="1" fill="#404040"/><rect x="0" y="6" width="1" height="1" fill="#FFFFFF"/><rect x="1" y="6" width="4" height="1" fill="#D4D0C8"/><rect x="5" y="6" width="1" height="1" fill="#808080"/><rect x="6" y="6" width="1" height="1" fill="#404040"/><rect x="0" y="7" width="1" height="1" fill="#FFFFFF"/><rect x="1" y="7" width="4" height="1" fill="#D4D0C8"/><rect x="5" y="7" width="1" height="1" fill="#808080"/><rect x="6" y="7" width="1" height="1" fill="#404040"/><rect x="0" y="8" width="1" height="1" fill="#FFFFFF"/><rect x="1" y="8" width="5" height="1" fill="#D4D0C8"/><rect x="6" y="8" width="1" height="1" fill="#FFFFFF"/><rect x="1" y="9" width="1" height="1" fill="#FFFFFF"/><rect x="2" y="9" width="3" height="1" fill="#D4D0C8"/><rect x="5" y="9" width="1" height="1" fill="#FFFFFF"/><rect x="2" y="10" width="1" height="1" fill="#FFFFFF"/><rect x="3" y="10" width="1" height="1" fill="#404040"/><rect x="4" y="10" width="1" height="1" fill="#FFFFFF"/><rect x="3" y="11" width="1" height="1" fill="#404040"/></svg>
<div style="left:167px;top:362px;width:243px;height:1px;background:#808080;"></div>
<div style="left:167px;top:363px;width:243px;height:1px;background:#FFFFFF;"></div>
<span class="t" style="top:372px;letter-spacing:-0.1px;right:452px;text-align:right;">3rd overtone:</span>
<span class="t" style="top:391px;letter-spacing:-0.08px;right:452px;text-align:right;">Inc. current at:</span>
<div style="left:251px;top:377px;width:93px;height:1px;background:#808080;"></div>
<div style="left:251px;top:378px;width:92px;height:1px;background:#404040;"></div>
<div style="left:251px;top:379px;width:92px;height:1px;background:#D4D0C8;"></div>
<div style="left:251px;top:380px;width:93px;height:1px;background:#FFFFFF;"></div>
<div style="left:251px;top:377px;width:1px;height:3px;background:#808080;"></div>
<div style="left:343px;top:377px;width:1px;height:4px;background:#FFFFFF;"></div>
<div style="left:342px;top:378px;width:1px;height:2px;background:#D4D0C8;"></div>
<div style="left:254px;top:387px;width:1px;height:3px;background:#000000;"></div>
<div style="left:256px;top:387px;width:1px;height:3px;background:#000000;"></div>
<div style="left:258px;top:387px;width:1px;height:3px;background:#000000;"></div>
<div style="left:260px;top:387px;width:1px;height:3px;background:#000000;"></div>
<div style="left:263px;top:387px;width:1px;height:3px;background:#000000;"></div>
<div style="left:265px;top:387px;width:1px;height:3px;background:#000000;"></div>
<div style="left:267px;top:387px;width:1px;height:3px;background:#000000;"></div>
<div style="left:269px;top:387px;width:1px;height:3px;background:#000000;"></div>
<div style="left:271px;top:387px;width:1px;height:3px;background:#000000;"></div>
<div style="left:273px;top:387px;width:1px;height:3px;background:#000000;"></div>
<div style="left:276px;top:387px;width:1px;height:3px;background:#000000;"></div>
<div style="left:278px;top:387px;width:1px;height:3px;background:#000000;"></div>
<div style="left:280px;top:387px;width:1px;height:3px;background:#000000;"></div>
<div style="left:282px;top:387px;width:1px;height:3px;background:#000000;"></div>
<div style="left:284px;top:387px;width:1px;height:3px;background:#000000;"></div>
<div style="left:286px;top:387px;width:1px;height:3px;background:#000000;"></div>
<div style="left:288px;top:387px;width:1px;height:3px;background:#000000;"></div>
<div style="left:291px;top:387px;width:1px;height:3px;background:#000000;"></div>
<div style="left:293px;top:387px;width:1px;height:3px;background:#000000;"></div>
<div style="left:295px;top:387px;width:1px;height:3px;background:#000000;"></div>
<div style="left:297px;top:387px;width:1px;height:3px;background:#000000;"></div>
<div style="left:299px;top:387px;width:1px;height:3px;background:#000000;"></div>
<div style="left:301px;top:387px;width:1px;height:3px;background:#000000;"></div>
<div style="left:303px;top:387px;width:1px;height:3px;background:#000000;"></div>
<div style="left:306px;top:387px;width:1px;height:3px;background:#000000;"></div>
<div style="left:308px;top:387px;width:1px;height:3px;background:#000000;"></div>
<div style="left:310px;top:387px;width:1px;height:3px;background:#000000;"></div>
<div style="left:312px;top:387px;width:1px;height:3px;background:#000000;"></div>
<div style="left:314px;top:387px;width:1px;height:3px;background:#000000;"></div>
<div style="left:316px;top:387px;width:1px;height:3px;background:#000000;"></div>
<div style="left:319px;top:387px;width:1px;height:3px;background:#000000;"></div>
<div style="left:321px;top:387px;width:1px;height:3px;background:#000000;"></div>
<div style="left:323px;top:387px;width:1px;height:3px;background:#000000;"></div>
<div style="left:325px;top:387px;width:1px;height:3px;background:#000000;"></div>
<div style="left:327px;top:387px;width:1px;height:3px;background:#000000;"></div>
<div style="left:329px;top:387px;width:1px;height:3px;background:#000000;"></div>
<div style="left:331px;top:387px;width:1px;height:3px;background:#000000;"></div>
<div style="left:334px;top:387px;width:1px;height:3px;background:#000000;"></div>
<div style="left:336px;top:387px;width:1px;height:3px;background:#000000;"></div>
<div style="left:338px;top:387px;width:1px;height:3px;background:#000000;"></div>
<div style="left:340px;top:387px;width:1px;height:3px;background:#000000;"></div>
<svg style="left:294px;top:374px" width="7" height="12" viewBox="0 0 7 12" shape-rendering="crispEdges"><rect x="0" y="0" width="6" height="1" fill="#FFFFFF"/><rect x="6" y="0" width="1" height="1" fill="#404040"/><rect x="0" y="1" width="1" height="1" fill="#FFFFFF"/><rect x="1" y="1" width="4" height="1" fill="#D4D0C8"/><rect x="5" y="1" width="1" height="1" fill="#808080"/><rect x="6" y="1" width="1" height="1" fill="#404040"/><rect x="0" y="2" width="1" height="1" fill="#FFFFFF"/><rect x="1" y="2" width="4" height="1" fill="#D4D0C8"/><rect x="5" y="2" width="1" height="1" fill="#808080"/><rect x="6" y="2" width="1" height="1" fill="#404040"/><rect x="0" y="3" width="1" height="1" fill="#FFFFFF"/><rect x="1" y="3" width="4" height="1" fill="#D4D0C8"/><rect x="5" y="3" width="1" height="1" fill="#808080"/><rect x="6" y="3" width="1" height="1" fill="#404040"/><rect x="0" y="4" width="1" height="1" fill="#FFFFFF"/><rect x="1" y="4" width="4" height="1" fill="#D4D0C8"/><rect x="5" y="4" width="1" height="1" fill="#808080"/><rect x="6" y="4" width="1" height="1" fill="#404040"/><rect x="0" y="5" width="1" height="1" fill="#FFFFFF"/><rect x="1" y="5" width="4" height="1" fill="#D4D0C8"/><rect x="5" y="5" width="1" height="1" fill="#808080"/><rect x="6" y="5" width="1" height="1" fill="#404040"/><rect x="0" y="6" width="1" height="1" fill="#FFFFFF"/><rect x="1" y="6" width="4" height="1" fill="#D4D0C8"/><rect x="5" y="6" width="1" height="1" fill="#808080"/><rect x="6" y="6" width="1" height="1" fill="#404040"/><rect x="0" y="7" width="1" height="1" fill="#FFFFFF"/><rect x="1" y="7" width="4" height="1" fill="#D4D0C8"/><rect x="5" y="7" width="1" height="1" fill="#808080"/><rect x="6" y="7" width="1" height="1" fill="#404040"/><rect x="0" y="8" width="1" height="1" fill="#FFFFFF"/><rect x="1" y="8" width="5" height="1" fill="#D4D0C8"/><rect x="6" y="8" width="1" height="1" fill="#FFFFFF"/><rect x="1" y="9" width="1" height="1" fill="#FFFFFF"/><rect x="2" y="9" width="3" height="1" fill="#D4D0C8"/><rect x="5" y="9" width="1" height="1" fill="#FFFFFF"/><rect x="2" y="10" width="1" height="1" fill="#FFFFFF"/><rect x="3" y="10" width="1" height="1" fill="#404040"/><rect x="4" y="10" width="1" height="1" fill="#FFFFFF"/><rect x="3" y="11" width="1" height="1" fill="#404040"/></svg>
<div style="left:251px;top:396px;width:93px;height:1px;background:#808080;"></div>
<div style="left:251px;top:397px;width:92px;height:1px;background:#404040;"></div>
<div style="left:251px;top:398px;width:92px;height:1px;background:#D4D0C8;"></div>
<div style="left:251px;top:399px;width:93px;height:1px;background:#FFFFFF;"></div>
<div style="left:251px;top:396px;width:1px;height:3px;background:#808080;"></div>
<div style="left:343px;top:396px;width:1px;height:4px;background:#FFFFFF;"></div>
<div style="left:342px;top:397px;width:1px;height:2px;background:#D4D0C8;"></div>
<div style="left:254px;top:406px;width:1px;height:3px;background:#000000;"></div>
<div style="left:257px;top:406px;width:1px;height:3px;background:#000000;"></div>
<div style="left:260px;top:406px;width:1px;height:3px;background:#000000;"></div>
<div style="left:262px;top:406px;width:1px;height:3px;background:#000000;"></div>
<div style="left:265px;top:406px;width:1px;height:3px;background:#000000;"></div>
<div style="left:268px;top:406px;width:1px;height:3px;background:#000000;"></div>
<div style="left:271px;top:406px;width:1px;height:3px;background:#000000;"></div>
<div style="left:273px;top:406px;width:1px;height:3px;background:#000000;"></div>
<div style="left:276px;top:406px;width:1px;height:3px;background:#000000;"></div>
<div style="left:279px;top:406px;width:1px;height:3px;background:#000000;"></div>
<div style="left:282px;top:406px;width:1px;height:3px;background:#000000;"></div>
<div style="left:285px;top:406px;width:1px;height:3px;background:#000000;"></div>
<div style="left:287px;top:406px;width:1px;height:3px;background:#000000;"></div>
<div style="left:290px;top:406px;width:1px;height:3px;background:#000000;"></div>
<div style="left:293px;top:406px;width:1px;height:3px;background:#000000;"></div>
<div style="left:296px;top:406px;width:1px;height:3px;background:#000000;"></div>
<div style="left:298px;top:406px;width:1px;height:3px;background:#000000;"></div>
<div style="left:301px;top:406px;width:1px;height:3px;background:#000000;"></div>
<div style="left:304px;top:406px;width:1px;height:3px;background:#000000;"></div>
<div style="left:307px;top:406px;width:1px;height:3px;background:#000000;"></div>
<div style="left:309px;top:406px;width:1px;height:3px;background:#000000;"></div>
<div style="left:312px;top:406px;width:1px;height:3px;background:#000000;"></div>
<div style="left:315px;top:406px;width:1px;height:3px;background:#000000;"></div>
<div style="left:318px;top:406px;width:1px;height:3px;background:#000000;"></div>
<div style="left:321px;top:406px;width:1px;height:3px;background:#000000;"></div>
<div style="left:323px;top:406px;width:1px;height:3px;background:#000000;"></div>
<div style="left:326px;top:406px;width:1px;height:3px;background:#000000;"></div>
<div style="left:329px;top:406px;width:1px;height:3px;background:#000000;"></div>
<div style="left:332px;top:406px;width:1px;height:3px;background:#000000;"></div>
<div style="left:334px;top:406px;width:1px;height:3px;background:#000000;"></div>
<div style="left:337px;top:406px;width:1px;height:3px;background:#000000;"></div>
<div style="left:340px;top:406px;width:1px;height:3px;background:#000000;"></div>
<svg style="left:270px;top:393px" width="7" height="12" viewBox="0 0 7 12" shape-rendering="crispEdges"><rect x="0" y="0" width="6" height="1" fill="#FFFFFF"/><rect x="6" y="0" width="1" height="1" fill="#404040"/><rect x="0" y="1" width="1" height="1" fill="#FFFFFF"/><rect x="1" y="1" width="4" height="1" fill="#D4D0C8"/><rect x="5" y="1" width="1" height="1" fill="#808080"/><rect x="6" y="1" width="1" height="1" fill="#404040"/><rect x="0" y="2" width="1" height="1" fill="#FFFFFF"/><rect x="1" y="2" width="4" height="1" fill="#D4D0C8"/><rect x="5" y="2" width="1" height="1" fill="#808080"/><rect x="6" y="2" width="1" height="1" fill="#404040"/><rect x="0" y="3" width="1" height="1" fill="#FFFFFF"/><rect x="1" y="3" width="4" height="1" fill="#D4D0C8"/><rect x="5" y="3" width="1" height="1" fill="#808080"/><rect x="6" y="3" width="1" height="1" fill="#404040"/><rect x="0" y="4" width="1" height="1" fill="#FFFFFF"/><rect x="1" y="4" width="4" height="1" fill="#D4D0C8"/><rect x="5" y="4" width="1" height="1" fill="#808080"/><rect x="6" y="4" width="1" height="1" fill="#404040"/><rect x="0" y="5" width="1" height="1" fill="#FFFFFF"/><rect x="1" y="5" width="4" height="1" fill="#D4D0C8"/><rect x="5" y="5" width="1" height="1" fill="#808080"/><rect x="6" y="5" width="1" height="1" fill="#404040"/><rect x="0" y="6" width="1" height="1" fill="#FFFFFF"/><rect x="1" y="6" width="4" height="1" fill="#D4D0C8"/><rect x="5" y="6" width="1" height="1" fill="#808080"/><rect x="6" y="6" width="1" height="1" fill="#404040"/><rect x="0" y="7" width="1" height="1" fill="#FFFFFF"/><rect x="1" y="7" width="4" height="1" fill="#D4D0C8"/><rect x="5" y="7" width="1" height="1" fill="#808080"/><rect x="6" y="7" width="1" height="1" fill="#404040"/><rect x="0" y="8" width="1" height="1" fill="#FFFFFF"/><rect x="1" y="8" width="5" height="1" fill="#D4D0C8"/><rect x="6" y="8" width="1" height="1" fill="#FFFFFF"/><rect x="1" y="9" width="1" height="1" fill="#FFFFFF"/><rect x="2" y="9" width="3" height="1" fill="#D4D0C8"/><rect x="5" y="9" width="1" height="1" fill="#FFFFFF"/><rect x="2" y="10" width="1" height="1" fill="#FFFFFF"/><rect x="3" y="10" width="1" height="1" fill="#404040"/><rect x="4" y="10" width="1" height="1" fill="#FFFFFF"/><rect x="3" y="11" width="1" height="1" fill="#404040"/></svg>
<div class="sunk" style="left:353px;top:372px;width:54px;height:19px;background-color:#FFFFFF;"><span style="letter-spacing:-0.1px;position:relative;top:0px">0</span></div>
<div class="sunk" style="left:353px;top:391px;width:54px;height:20px;background-color:#FFFFFF;"><span style="letter-spacing:-0.1px;position:relative;top:-1px">50</span></div>
<div style="left:167px;top:417px;width:243px;height:1px;background:#808080;"></div>
<div style="left:167px;top:418px;width:243px;height:1px;background:#FFFFFF;"></div>
<span class="t" style="top:424px;letter-spacing:-0.23px;left:166px;">Guiding corrections: (% of the sidereal speed)</span>
<div style="left:188px;top:445px;width:203px;height:1px;background:#808080;"></div>
<div style="left:188px;top:446px;width:202px;height:1px;background:#404040;"></div>
<div style="left:188px;top:447px;width:202px;height:1px;background:#D4D0C8;"></div>
<div style="left:188px;top:448px;width:203px;height:1px;background:#FFFFFF;"></div>
<div style="left:188px;top:445px;width:1px;height:3px;background:#808080;"></div>
<div style="left:390px;top:445px;width:1px;height:4px;background:#FFFFFF;"></div>
<div style="left:389px;top:446px;width:1px;height:2px;background:#D4D0C8;"></div>
<div style="left:191px;top:455px;width:1px;height:3px;background:#000000;"></div>
<div style="left:199px;top:455px;width:1px;height:3px;background:#000000;"></div>
<div style="left:207px;top:455px;width:1px;height:3px;background:#000000;"></div>
<div style="left:216px;top:455px;width:1px;height:3px;background:#000000;"></div>
<div style="left:224px;top:455px;width:1px;height:3px;background:#000000;"></div>
<div style="left:232px;top:455px;width:1px;height:3px;background:#000000;"></div>
<div style="left:240px;top:455px;width:1px;height:3px;background:#000000;"></div>
<div style="left:248px;top:455px;width:1px;height:3px;background:#000000;"></div>
<div style="left:257px;top:455px;width:1px;height:3px;background:#000000;"></div>
<div style="left:265px;top:455px;width:1px;height:3px;background:#000000;"></div>
<div style="left:273px;top:455px;width:1px;height:3px;background:#000000;"></div>
<div style="left:281px;top:455px;width:1px;height:3px;background:#000000;"></div>
<div style="left:290px;top:455px;width:1px;height:3px;background:#000000;"></div>
<div style="left:298px;top:455px;width:1px;height:3px;background:#000000;"></div>
<div style="left:306px;top:455px;width:1px;height:3px;background:#000000;"></div>
<div style="left:314px;top:455px;width:1px;height:3px;background:#000000;"></div>
<div style="left:322px;top:455px;width:1px;height:3px;background:#000000;"></div>
<div style="left:331px;top:455px;width:1px;height:3px;background:#000000;"></div>
<div style="left:339px;top:455px;width:1px;height:3px;background:#000000;"></div>
<div style="left:347px;top:455px;width:1px;height:3px;background:#000000;"></div>
<div style="left:355px;top:455px;width:1px;height:3px;background:#000000;"></div>
<div style="left:363px;top:455px;width:1px;height:3px;background:#000000;"></div>
<div style="left:372px;top:455px;width:1px;height:3px;background:#000000;"></div>
<div style="left:380px;top:455px;width:1px;height:3px;background:#000000;"></div>
<div style="left:388px;top:455px;width:1px;height:3px;background:#000000;"></div>
<svg style="left:204px;top:442px" width="7" height="12" viewBox="0 0 7 12" shape-rendering="crispEdges"><rect x="0" y="0" width="6" height="1" fill="#FFFFFF"/><rect x="6" y="0" width="1" height="1" fill="#404040"/><rect x="0" y="1" width="1" height="1" fill="#FFFFFF"/><rect x="1" y="1" width="4" height="1" fill="#D4D0C8"/><rect x="5" y="1" width="1" height="1" fill="#808080"/><rect x="6" y="1" width="1" height="1" fill="#404040"/><rect x="0" y="2" width="1" height="1" fill="#FFFFFF"/><rect x="1" y="2" width="4" height="1" fill="#D4D0C8"/><rect x="5" y="2" width="1" height="1" fill="#808080"/><rect x="6" y="2" width="1" height="1" fill="#404040"/><rect x="0" y="3" width="1" height="1" fill="#FFFFFF"/><rect x="1" y="3" width="4" height="1" fill="#D4D0C8"/><rect x="5" y="3" width="1" height="1" fill="#808080"/><rect x="6" y="3" width="1" height="1" fill="#404040"/><rect x="0" y="4" width="1" height="1" fill="#FFFFFF"/><rect x="1" y="4" width="4" height="1" fill="#D4D0C8"/><rect x="5" y="4" width="1" height="1" fill="#808080"/><rect x="6" y="4" width="1" height="1" fill="#404040"/><rect x="0" y="5" width="1" height="1" fill="#FFFFFF"/><rect x="1" y="5" width="4" height="1" fill="#D4D0C8"/><rect x="5" y="5" width="1" height="1" fill="#808080"/><rect x="6" y="5" width="1" height="1" fill="#404040"/><rect x="0" y="6" width="1" height="1" fill="#FFFFFF"/><rect x="1" y="6" width="4" height="1" fill="#D4D0C8"/><rect x="5" y="6" width="1" height="1" fill="#808080"/><rect x="6" y="6" width="1" height="1" fill="#404040"/><rect x="0" y="7" width="1" height="1" fill="#FFFFFF"/><rect x="1" y="7" width="4" height="1" fill="#D4D0C8"/><rect x="5" y="7" width="1" height="1" fill="#808080"/><rect x="6" y="7" width="1" height="1" fill="#404040"/><rect x="0" y="8" width="1" height="1" fill="#FFFFFF"/><rect x="1" y="8" width="5" height="1" fill="#D4D0C8"/><rect x="6" y="8" width="1" height="1" fill="#FFFFFF"/><rect x="1" y="9" width="1" height="1" fill="#FFFFFF"/><rect x="2" y="9" width="3" height="1" fill="#D4D0C8"/><rect x="5" y="9" width="1" height="1" fill="#FFFFFF"/><rect x="2" y="10" width="1" height="1" fill="#FFFFFF"/><rect x="3" y="10" width="1" height="1" fill="#404040"/><rect x="4" y="10" width="1" height="1" fill="#FFFFFF"/><rect x="3" y="11" width="1" height="1" fill="#404040"/></svg>
<span class="t" style="top:461px;letter-spacing:-0.9px;left:91px;width:200px;text-align:center;">25%</span>
<span class="t" style="top:461px;letter-spacing:-0.9px;left:124px;width:200px;text-align:center;">50%</span>
<span class="t" style="top:461px;letter-spacing:-0.9px;left:157px;width:200px;text-align:center;">75%</span>
<span class="t" style="top:461px;letter-spacing:-0.9px;left:190px;width:200px;text-align:center;">100%</span>
<span class="t" style="top:461px;letter-spacing:-0.9px;left:223px;width:200px;text-align:center;">125%</span>
<span class="t" style="top:461px;letter-spacing:-0.9px;left:256px;width:200px;text-align:center;">150%</span>
<span class="t" style="top:461px;letter-spacing:-0.9px;left:289px;width:200px;text-align:center;">175%</span>
<div style="left:425px;top:134px;width:7px;height:1px;background:#808080;"></div>
<div style="left:426px;top:135px;width:6px;height:1px;background:#FFFFFF;"></div>
<div style="left:451px;top:134px;width:231px;height:1px;background:#808080;"></div>
<div style="left:451px;top:135px;width:230px;height:1px;background:#FFFFFF;"></div>
<div style="left:425px;top:134px;width:1px;height:346px;background:#808080;"></div>
<div style="left:426px;top:135px;width:1px;height:344px;background:#FFFFFF;"></div>
<div style="left:425px;top:479px;width:257px;height:1px;background:#808080;"></div>
<div style="left:425px;top:480px;width:258px;height:1px;background:#FFFFFF;"></div>
<div style="left:681px;top:134px;width:1px;height:346px;background:#808080;"></div>
<div style="left:682px;top:134px;width:1px;height:347px;background:#FFFFFF;"></div>
<span class="t" style="top:128px;letter-spacing:-0.29px;left:434px;">DE</span>
<div class="sunk" style="left:479px;top:151px;width:13px;height:13px;background-color:#FFFFFF;"></div>
<span class="t" style="top:151px;letter-spacing:-0.22px;left:497px;">Reverse rotation</span>
<div class="sunk" style="left:479px;top:170px;width:13px;height:13px;background-color:#FFFFFF;"></div>
<span class="t" style="top:170px;letter-spacing:-0.2px;left:497px;">Reverse autoguiding</span>
<div style="left:431px;top:190px;width:243px;height:1px;background:#808080;"></div>
<div style="left:431px;top:191px;width:243px;height:1px;background:#FFFFFF;"></div>
<span class="t" style="top:203px;letter-spacing:-0.25px;right:188.5px;text-align:right;">Max speed:</span>
<span class="t" style="top:222px;letter-spacing:-0.12px;right:187.5px;text-align:right;">Acceleration:</span>
<span class="t" style="top:242px;letter-spacing:-0.19px;right:188.5px;text-align:right;">Deceleration:</span>
<div style="left:515px;top:208px;width:93px;height:1px;background:#808080;"></div>
<div style="left:515px;top:209px;width:92px;height:1px;background:#404040;"></div>
<div style="left:515px;top:210px;width:92px;height:1px;background:#D4D0C8;"></div>
<div style="left:515px;top:211px;width:93px;height:1px;background:#FFFFFF;"></div>
<div style="left:515px;top:208px;width:1px;height:3px;background:#808080;"></div>
<div style="left:607px;top:208px;width:1px;height:4px;background:#FFFFFF;"></div>
<div style="left:606px;top:209px;width:1px;height:2px;background:#D4D0C8;"></div>
<div style="left:518px;top:218px;width:1px;height:3px;background:#000000;"></div>
<div style="left:520px;top:218px;width:1px;height:3px;background:#000000;"></div>
<div style="left:522px;top:218px;width:1px;height:3px;background:#000000;"></div>
<div style="left:525px;top:218px;width:1px;height:3px;background:#000000;"></div>
<div style="left:527px;top:218px;width:1px;height:3px;background:#000000;"></div>
<div style="left:529px;top:218px;width:1px;height:3px;background:#000000;"></div>
<div style="left:531px;top:218px;width:1px;height:3px;background:#000000;"></div>
<div style="left:533px;top:218px;width:1px;height:3px;background:#000000;"></div>
<div style="left:536px;top:218px;width:1px;height:3px;background:#000000;"></div>
<div style="left:538px;top:218px;width:1px;height:3px;background:#000000;"></div>
<div style="left:540px;top:218px;width:1px;height:3px;background:#000000;"></div>
<div style="left:542px;top:218px;width:1px;height:3px;background:#000000;"></div>
<div style="left:544px;top:218px;width:1px;height:3px;background:#000000;"></div>
<div style="left:547px;top:218px;width:1px;height:3px;background:#000000;"></div>
<div style="left:549px;top:218px;width:1px;height:3px;background:#000000;"></div>
<div style="left:551px;top:218px;width:1px;height:3px;background:#000000;"></div>
<div style="left:553px;top:218px;width:1px;height:3px;background:#000000;"></div>
<div style="left:555px;top:218px;width:1px;height:3px;background:#000000;"></div>
<div style="left:558px;top:218px;width:1px;height:3px;background:#000000;"></div>
<div style="left:560px;top:218px;width:1px;height:3px;background:#000000;"></div>
<div style="left:562px;top:218px;width:1px;height:3px;background:#000000;"></div>
<div style="left:564px;top:218px;width:1px;height:3px;background:#000000;"></div>
<div style="left:567px;top:218px;width:1px;height:3px;background:#000000;"></div>
<div style="left:569px;top:218px;width:1px;height:3px;background:#000000;"></div>
<div style="left:571px;top:218px;width:1px;height:3px;background:#000000;"></div>
<div style="left:573px;top:218px;width:1px;height:3px;background:#000000;"></div>
<div style="left:575px;top:218px;width:1px;height:3px;background:#000000;"></div>
<div style="left:578px;top:218px;width:1px;height:3px;background:#000000;"></div>
<div style="left:580px;top:218px;width:1px;height:3px;background:#000000;"></div>
<div style="left:582px;top:218px;width:1px;height:3px;background:#000000;"></div>
<div style="left:584px;top:218px;width:1px;height:3px;background:#000000;"></div>
<div style="left:586px;top:218px;width:1px;height:3px;background:#000000;"></div>
<div style="left:589px;top:218px;width:1px;height:3px;background:#000000;"></div>
<div style="left:591px;top:218px;width:1px;height:3px;background:#000000;"></div>
<div style="left:593px;top:218px;width:1px;height:3px;background:#000000;"></div>
<div style="left:595px;top:218px;width:1px;height:3px;background:#000000;"></div>
<div style="left:597px;top:218px;width:1px;height:3px;background:#000000;"></div>
<div style="left:600px;top:218px;width:1px;height:3px;background:#000000;"></div>
<div style="left:602px;top:218px;width:1px;height:3px;background:#000000;"></div>
<div style="left:604px;top:218px;width:1px;height:3px;background:#000000;"></div>
<svg style="left:537px;top:205px" width="7" height="12" viewBox="0 0 7 12" shape-rendering="crispEdges"><rect x="0" y="0" width="6" height="1" fill="#FFFFFF"/><rect x="6" y="0" width="1" height="1" fill="#404040"/><rect x="0" y="1" width="1" height="1" fill="#FFFFFF"/><rect x="1" y="1" width="4" height="1" fill="#D4D0C8"/><rect x="5" y="1" width="1" height="1" fill="#808080"/><rect x="6" y="1" width="1" height="1" fill="#404040"/><rect x="0" y="2" width="1" height="1" fill="#FFFFFF"/><rect x="1" y="2" width="4" height="1" fill="#D4D0C8"/><rect x="5" y="2" width="1" height="1" fill="#808080"/><rect x="6" y="2" width="1" height="1" fill="#404040"/><rect x="0" y="3" width="1" height="1" fill="#FFFFFF"/><rect x="1" y="3" width="4" height="1" fill="#D4D0C8"/><rect x="5" y="3" width="1" height="1" fill="#808080"/><rect x="6" y="3" width="1" height="1" fill="#404040"/><rect x="0" y="4" width="1" height="1" fill="#FFFFFF"/><rect x="1" y="4" width="4" height="1" fill="#D4D0C8"/><rect x="5" y="4" width="1" height="1" fill="#808080"/><rect x="6" y="4" width="1" height="1" fill="#404040"/><rect x="0" y="5" width="1" height="1" fill="#FFFFFF"/><rect x="1" y="5" width="4" height="1" fill="#D4D0C8"/><rect x="5" y="5" width="1" height="1" fill="#808080"/><rect x="6" y="5" width="1" height="1" fill="#404040"/><rect x="0" y="6" width="1" height="1" fill="#FFFFFF"/><rect x="1" y="6" width="4" height="1" fill="#D4D0C8"/><rect x="5" y="6" width="1" height="1" fill="#808080"/><rect x="6" y="6" width="1" height="1" fill="#404040"/><rect x="0" y="7" width="1" height="1" fill="#FFFFFF"/><rect x="1" y="7" width="4" height="1" fill="#D4D0C8"/><rect x="5" y="7" width="1" height="1" fill="#808080"/><rect x="6" y="7" width="1" height="1" fill="#404040"/><rect x="0" y="8" width="1" height="1" fill="#FFFFFF"/><rect x="1" y="8" width="5" height="1" fill="#D4D0C8"/><rect x="6" y="8" width="1" height="1" fill="#FFFFFF"/><rect x="1" y="9" width="1" height="1" fill="#FFFFFF"/><rect x="2" y="9" width="3" height="1" fill="#D4D0C8"/><rect x="5" y="9" width="1" height="1" fill="#FFFFFF"/><rect x="2" y="10" width="1" height="1" fill="#FFFFFF"/><rect x="3" y="10" width="1" height="1" fill="#404040"/><rect x="4" y="10" width="1" height="1" fill="#FFFFFF"/><rect x="3" y="11" width="1" height="1" fill="#404040"/></svg>
<div style="left:515px;top:227px;width:93px;height:1px;background:#808080;"></div>
<div style="left:515px;top:228px;width:92px;height:1px;background:#404040;"></div>
<div style="left:515px;top:229px;width:92px;height:1px;background:#D4D0C8;"></div>
<div style="left:515px;top:230px;width:93px;height:1px;background:#FFFFFF;"></div>
<div style="left:515px;top:227px;width:1px;height:3px;background:#808080;"></div>
<div style="left:607px;top:227px;width:1px;height:4px;background:#FFFFFF;"></div>
<div style="left:606px;top:228px;width:1px;height:2px;background:#D4D0C8;"></div>
<div style="left:518px;top:237px;width:1px;height:3px;background:#000000;"></div>
<div style="left:604px;top:237px;width:1px;height:3px;background:#000000;"></div>
<svg style="left:593px;top:224px" width="7" height="12" viewBox="0 0 7 12" shape-rendering="crispEdges"><rect x="0" y="0" width="6" height="1" fill="#FFFFFF"/><rect x="6" y="0" width="1" height="1" fill="#404040"/><rect x="0" y="1" width="1" height="1" fill="#FFFFFF"/><rect x="1" y="1" width="4" height="1" fill="#D4D0C8"/><rect x="5" y="1" width="1" height="1" fill="#808080"/><rect x="6" y="1" width="1" height="1" fill="#404040"/><rect x="0" y="2" width="1" height="1" fill="#FFFFFF"/><rect x="1" y="2" width="4" height="1" fill="#D4D0C8"/><rect x="5" y="2" width="1" height="1" fill="#808080"/><rect x="6" y="2" width="1" height="1" fill="#404040"/><rect x="0" y="3" width="1" height="1" fill="#FFFFFF"/><rect x="1" y="3" width="4" height="1" fill="#D4D0C8"/><rect x="5" y="3" width="1" height="1" fill="#808080"/><rect x="6" y="3" width="1" height="1" fill="#404040"/><rect x="0" y="4" width="1" height="1" fill="#FFFFFF"/><rect x="1" y="4" width="4" height="1" fill="#D4D0C8"/><rect x="5" y="4" width="1" height="1" fill="#808080"/><rect x="6" y="4" width="1" height="1" fill="#404040"/><rect x="0" y="5" width="1" height="1" fill="#FFFFFF"/><rect x="1" y="5" width="4" height="1" fill="#D4D0C8"/><rect x="5" y="5" width="1" height="1" fill="#808080"/><rect x="6" y="5" width="1" height="1" fill="#404040"/><rect x="0" y="6" width="1" height="1" fill="#FFFFFF"/><rect x="1" y="6" width="4" height="1" fill="#D4D0C8"/><rect x="5" y="6" width="1" height="1" fill="#808080"/><rect x="6" y="6" width="1" height="1" fill="#404040"/><rect x="0" y="7" width="1" height="1" fill="#FFFFFF"/><rect x="1" y="7" width="4" height="1" fill="#D4D0C8"/><rect x="5" y="7" width="1" height="1" fill="#808080"/><rect x="6" y="7" width="1" height="1" fill="#404040"/><rect x="0" y="8" width="1" height="1" fill="#FFFFFF"/><rect x="1" y="8" width="5" height="1" fill="#D4D0C8"/><rect x="6" y="8" width="1" height="1" fill="#FFFFFF"/><rect x="1" y="9" width="1" height="1" fill="#FFFFFF"/><rect x="2" y="9" width="3" height="1" fill="#D4D0C8"/><rect x="5" y="9" width="1" height="1" fill="#FFFFFF"/><rect x="2" y="10" width="1" height="1" fill="#FFFFFF"/><rect x="3" y="10" width="1" height="1" fill="#404040"/><rect x="4" y="10" width="1" height="1" fill="#FFFFFF"/><rect x="3" y="11" width="1" height="1" fill="#404040"/></svg>
<div style="left:515px;top:247px;width:93px;height:1px;background:#808080;"></div>
<div style="left:515px;top:248px;width:92px;height:1px;background:#404040;"></div>
<div style="left:515px;top:249px;width:92px;height:1px;background:#D4D0C8;"></div>
<div style="left:515px;top:250px;width:93px;height:1px;background:#FFFFFF;"></div>
<div style="left:515px;top:247px;width:1px;height:3px;background:#808080;"></div>
<div style="left:607px;top:247px;width:1px;height:4px;background:#FFFFFF;"></div>
<div style="left:606px;top:248px;width:1px;height:2px;background:#D4D0C8;"></div>
<div style="left:518px;top:257px;width:1px;height:3px;background:#000000;"></div>
<div style="left:604px;top:257px;width:1px;height:3px;background:#000000;"></div>
<svg style="left:593px;top:244px" width="7" height="12" viewBox="0 0 7 12" shape-rendering="crispEdges"><rect x="0" y="0" width="6" height="1" fill="#FFFFFF"/><rect x="6" y="0" width="1" height="1" fill="#404040"/><rect x="0" y="1" width="1" height="1" fill="#FFFFFF"/><rect x="1" y="1" width="4" height="1" fill="#D4D0C8"/><rect x="5" y="1" width="1" height="1" fill="#808080"/><rect x="6" y="1" width="1" height="1" fill="#404040"/><rect x="0" y="2" width="1" height="1" fill="#FFFFFF"/><rect x="1" y="2" width="4" height="1" fill="#D4D0C8"/><rect x="5" y="2" width="1" height="1" fill="#808080"/><rect x="6" y="2" width="1" height="1" fill="#404040"/><rect x="0" y="3" width="1" height="1" fill="#FFFFFF"/><rect x="1" y="3" width="4" height="1" fill="#D4D0C8"/><rect x="5" y="3" width="1" height="1" fill="#808080"/><rect x="6" y="3" width="1" height="1" fill="#404040"/><rect x="0" y="4" width="1" height="1" fill="#FFFFFF"/><rect x="1" y="4" width="4" height="1" fill="#D4D0C8"/><rect x="5" y="4" width="1" height="1" fill="#808080"/><rect x="6" y="4" width="1" height="1" fill="#404040"/><rect x="0" y="5" width="1" height="1" fill="#FFFFFF"/><rect x="1" y="5" width="4" height="1" fill="#D4D0C8"/><rect x="5" y="5" width="1" height="1" fill="#808080"/><rect x="6" y="5" width="1" height="1" fill="#404040"/><rect x="0" y="6" width="1" height="1" fill="#FFFFFF"/><rect x="1" y="6" width="4" height="1" fill="#D4D0C8"/><rect x="5" y="6" width="1" height="1" fill="#808080"/><rect x="6" y="6" width="1" height="1" fill="#404040"/><rect x="0" y="7" width="1" height="1" fill="#FFFFFF"/><rect x="1" y="7" width="4" height="1" fill="#D4D0C8"/><rect x="5" y="7" width="1" height="1" fill="#808080"/><rect x="6" y="7" width="1" height="1" fill="#404040"/><rect x="0" y="8" width="1" height="1" fill="#FFFFFF"/><rect x="1" y="8" width="5" height="1" fill="#D4D0C8"/><rect x="6" y="8" width="1" height="1" fill="#FFFFFF"/><rect x="1" y="9" width="1" height="1" fill="#FFFFFF"/><rect x="2" y="9" width="3" height="1" fill="#D4D0C8"/><rect x="5" y="9" width="1" height="1" fill="#FFFFFF"/><rect x="2" y="10" width="1" height="1" fill="#FFFFFF"/><rect x="3" y="10" width="1" height="1" fill="#404040"/><rect x="4" y="10" width="1" height="1" fill="#FFFFFF"/><rect x="3" y="11" width="1" height="1" fill="#404040"/></svg>
<div class="sunk" style="left:617px;top:203px;width:54px;height:19px;background-color:#FFFFFF;"><span style="letter-spacing:-0.1px;position:relative;top:0px">300</span></div>
<div class="sunk" style="left:617px;top:222px;width:54px;height:20px;background-color:#FFFFFF;"><span style="letter-spacing:-0.1px;position:relative;top:-1px">230</span></div>
<div class="sunk" style="left:617px;top:242px;width:54px;height:20px;background-color:#FFFFFF;"><span style="letter-spacing:-0.1px;position:relative;top:-1px">230</span></div>
<div style="left:431px;top:268px;width:243px;height:1px;background:#808080;"></div>
<div style="left:431px;top:269px;width:243px;height:1px;background:#FFFFFF;"></div>
<span class="t" style="top:276px;letter-spacing:-0.3px;right:219px;text-align:right;">Max:</span>
<span class="t" style="top:297px;letter-spacing:-0.3px;right:219px;text-align:right;">Idle:</span>
<span class="t" style="top:317px;letter-spacing:-0.14px;right:219px;text-align:right;">Track:</span>
<span class="t" style="top:336px;letter-spacing:-0.3px;right:219px;text-align:right;">Run:</span>
<div class="sunk" style="left:479px;top:274px;width:45px;height:20px;background-color:#D4D0C8;"><span style="letter-spacing:-0.1px;position:relative;top:-1px">1400</span></div>
<div class="sunk" style="left:479px;top:297px;width:45px;height:20px;background-color:#FFFFFF;"><span style="letter-spacing:-0.1px;position:relative;top:-1px">200</span></div>
<div class="sunk" style="left:479px;top:317px;width:45px;height:19px;background-color:#FFFFFF;"><span style="letter-spacing:-0.1px;position:relative;top:0px">400</span></div>
<div class="sunk" style="left:479px;top:336px;width:45px;height:20px;background-color:#FFFFFF;"><span style="letter-spacing:-0.1px;position:relative;top:-1px">600</span></div>
<span class="t" style="top:276px;letter-spacing:-0.9px;left:526px;">mA</span>
<span class="t" style="top:278px;letter-spacing:-0.18px;left:637px;">Decay</span>
<div style="left:530px;top:302px;width:78px;height:1px;background:#808080;"></div>
<div style="left:530px;top:303px;width:77px;height:1px;background:#404040;"></div>
<div style="left:530px;top:304px;width:77px;height:1px;background:#D4D0C8;"></div>
<div style="left:530px;top:305px;width:78px;height:1px;background:#FFFFFF;"></div>
<div style="left:530px;top:302px;width:1px;height:3px;background:#808080;"></div>
<div style="left:607px;top:302px;width:1px;height:4px;background:#FFFFFF;"></div>
<div style="left:606px;top:303px;width:1px;height:2px;background:#D4D0C8;"></div>
<div style="left:533px;top:312px;width:1px;height:3px;background:#000000;"></div>
<div style="left:538px;top:312px;width:1px;height:3px;background:#000000;"></div>
<div style="left:542px;top:312px;width:1px;height:3px;background:#000000;"></div>
<div style="left:547px;top:312px;width:1px;height:3px;background:#000000;"></div>
<div style="left:552px;top:312px;width:1px;height:3px;background:#000000;"></div>
<div style="left:557px;top:312px;width:1px;height:3px;background:#000000;"></div>
<div style="left:561px;top:312px;width:1px;height:3px;background:#000000;"></div>
<div style="left:566px;top:312px;width:1px;height:3px;background:#000000;"></div>
<div style="left:571px;top:312px;width:1px;height:3px;background:#000000;"></div>
<div style="left:576px;top:312px;width:1px;height:3px;background:#000000;"></div>
<div style="left:580px;top:312px;width:1px;height:3px;background:#000000;"></div>
<div style="left:585px;top:312px;width:1px;height:3px;background:#000000;"></div>
<div style="left:590px;top:312px;width:1px;height:3px;background:#000000;"></div>
<div style="left:595px;top:312px;width:1px;height:3px;background:#000000;"></div>
<div style="left:599px;top:312px;width:1px;height:3px;background:#000000;"></div>
<div style="left:604px;top:312px;width:1px;height:3px;background:#000000;"></div>
<svg style="left:539px;top:299px" width="7" height="12" viewBox="0 0 7 12" shape-rendering="crispEdges"><rect x="0" y="0" width="6" height="1" fill="#FFFFFF"/><rect x="6" y="0" width="1" height="1" fill="#404040"/><rect x="0" y="1" width="1" height="1" fill="#FFFFFF"/><rect x="1" y="1" width="4" height="1" fill="#D4D0C8"/><rect x="5" y="1" width="1" height="1" fill="#808080"/><rect x="6" y="1" width="1" height="1" fill="#404040"/><rect x="0" y="2" width="1" height="1" fill="#FFFFFF"/><rect x="1" y="2" width="4" height="1" fill="#D4D0C8"/><rect x="5" y="2" width="1" height="1" fill="#808080"/><rect x="6" y="2" width="1" height="1" fill="#404040"/><rect x="0" y="3" width="1" height="1" fill="#FFFFFF"/><rect x="1" y="3" width="4" height="1" fill="#D4D0C8"/><rect x="5" y="3" width="1" height="1" fill="#808080"/><rect x="6" y="3" width="1" height="1" fill="#404040"/><rect x="0" y="4" width="1" height="1" fill="#FFFFFF"/><rect x="1" y="4" width="4" height="1" fill="#D4D0C8"/><rect x="5" y="4" width="1" height="1" fill="#808080"/><rect x="6" y="4" width="1" height="1" fill="#404040"/><rect x="0" y="5" width="1" height="1" fill="#FFFFFF"/><rect x="1" y="5" width="4" height="1" fill="#D4D0C8"/><rect x="5" y="5" width="1" height="1" fill="#808080"/><rect x="6" y="5" width="1" height="1" fill="#404040"/><rect x="0" y="6" width="1" height="1" fill="#FFFFFF"/><rect x="1" y="6" width="4" height="1" fill="#D4D0C8"/><rect x="5" y="6" width="1" height="1" fill="#808080"/><rect x="6" y="6" width="1" height="1" fill="#404040"/><rect x="0" y="7" width="1" height="1" fill="#FFFFFF"/><rect x="1" y="7" width="4" height="1" fill="#D4D0C8"/><rect x="5" y="7" width="1" height="1" fill="#808080"/><rect x="6" y="7" width="1" height="1" fill="#404040"/><rect x="0" y="8" width="1" height="1" fill="#FFFFFF"/><rect x="1" y="8" width="5" height="1" fill="#D4D0C8"/><rect x="6" y="8" width="1" height="1" fill="#FFFFFF"/><rect x="1" y="9" width="1" height="1" fill="#FFFFFF"/><rect x="2" y="9" width="3" height="1" fill="#D4D0C8"/><rect x="5" y="9" width="1" height="1" fill="#FFFFFF"/><rect x="2" y="10" width="1" height="1" fill="#FFFFFF"/><rect x="3" y="10" width="1" height="1" fill="#404040"/><rect x="4" y="10" width="1" height="1" fill="#FFFFFF"/><rect x="3" y="11" width="1" height="1" fill="#404040"/></svg>
<div style="left:530px;top:322px;width:78px;height:1px;background:#808080;"></div>
<div style="left:530px;top:323px;width:77px;height:1px;background:#404040;"></div>
<div style="left:530px;top:324px;width:77px;height:1px;background:#D4D0C8;"></div>
<div style="left:530px;top:325px;width:78px;height:1px;background:#FFFFFF;"></div>
<div style="left:530px;top:322px;width:1px;height:3px;background:#808080;"></div>
<div style="left:607px;top:322px;width:1px;height:4px;background:#FFFFFF;"></div>
<div style="left:606px;top:323px;width:1px;height:2px;background:#D4D0C8;"></div>
<div style="left:533px;top:332px;width:1px;height:3px;background:#000000;"></div>
<div style="left:538px;top:332px;width:1px;height:3px;background:#000000;"></div>
<div style="left:542px;top:332px;width:1px;height:3px;background:#000000;"></div>
<div style="left:547px;top:332px;width:1px;height:3px;background:#000000;"></div>
<div style="left:552px;top:332px;width:1px;height:3px;background:#000000;"></div>
<div style="left:557px;top:332px;width:1px;height:3px;background:#000000;"></div>
<div style="left:561px;top:332px;width:1px;height:3px;background:#000000;"></div>
<div style="left:566px;top:332px;width:1px;height:3px;background:#000000;"></div>
<div style="left:571px;top:332px;width:1px;height:3px;background:#000000;"></div>
<div style="left:576px;top:332px;width:1px;height:3px;background:#000000;"></div>
<div style="left:580px;top:332px;width:1px;height:3px;background:#000000;"></div>
<div style="left:585px;top:332px;width:1px;height:3px;background:#000000;"></div>
<div style="left:590px;top:332px;width:1px;height:3px;background:#000000;"></div>
<div style="left:595px;top:332px;width:1px;height:3px;background:#000000;"></div>
<div style="left:599px;top:332px;width:1px;height:3px;background:#000000;"></div>
<div style="left:604px;top:332px;width:1px;height:3px;background:#000000;"></div>
<svg style="left:549px;top:319px" width="7" height="12" viewBox="0 0 7 12" shape-rendering="crispEdges"><rect x="0" y="0" width="6" height="1" fill="#FFFFFF"/><rect x="6" y="0" width="1" height="1" fill="#404040"/><rect x="0" y="1" width="1" height="1" fill="#FFFFFF"/><rect x="1" y="1" width="4" height="1" fill="#D4D0C8"/><rect x="5" y="1" width="1" height="1" fill="#808080"/><rect x="6" y="1" width="1" height="1" fill="#404040"/><rect x="0" y="2" width="1" height="1" fill="#FFFFFF"/><rect x="1" y="2" width="4" height="1" fill="#D4D0C8"/><rect x="5" y="2" width="1" height="1" fill="#808080"/><rect x="6" y="2" width="1" height="1" fill="#404040"/><rect x="0" y="3" width="1" height="1" fill="#FFFFFF"/><rect x="1" y="3" width="4" height="1" fill="#D4D0C8"/><rect x="5" y="3" width="1" height="1" fill="#808080"/><rect x="6" y="3" width="1" height="1" fill="#404040"/><rect x="0" y="4" width="1" height="1" fill="#FFFFFF"/><rect x="1" y="4" width="4" height="1" fill="#D4D0C8"/><rect x="5" y="4" width="1" height="1" fill="#808080"/><rect x="6" y="4" width="1" height="1" fill="#404040"/><rect x="0" y="5" width="1" height="1" fill="#FFFFFF"/><rect x="1" y="5" width="4" height="1" fill="#D4D0C8"/><rect x="5" y="5" width="1" height="1" fill="#808080"/><rect x="6" y="5" width="1" height="1" fill="#404040"/><rect x="0" y="6" width="1" height="1" fill="#FFFFFF"/><rect x="1" y="6" width="4" height="1" fill="#D4D0C8"/><rect x="5" y="6" width="1" height="1" fill="#808080"/><rect x="6" y="6" width="1" height="1" fill="#404040"/><rect x="0" y="7" width="1" height="1" fill="#FFFFFF"/><rect x="1" y="7" width="4" height="1" fill="#D4D0C8"/><rect x="5" y="7" width="1" height="1" fill="#808080"/><rect x="6" y="7" width="1" height="1" fill="#404040"/><rect x="0" y="8" width="1" height="1" fill="#FFFFFF"/><rect x="1" y="8" width="5" height="1" fill="#D4D0C8"/><rect x="6" y="8" width="1" height="1" fill="#FFFFFF"/><rect x="1" y="9" width="1" height="1" fill="#FFFFFF"/><rect x="2" y="9" width="3" height="1" fill="#D4D0C8"/><rect x="5" y="9" width="1" height="1" fill="#FFFFFF"/><rect x="2" y="10" width="1" height="1" fill="#FFFFFF"/><rect x="3" y="10" width="1" height="1" fill="#404040"/><rect x="4" y="10" width="1" height="1" fill="#FFFFFF"/><rect x="3" y="11" width="1" height="1" fill="#404040"/></svg>
<div style="left:530px;top:341px;width:78px;height:1px;background:#808080;"></div>
<div style="left:530px;top:342px;width:77px;height:1px;background:#404040;"></div>
<div style="left:530px;top:343px;width:77px;height:1px;background:#D4D0C8;"></div>
<div style="left:530px;top:344px;width:78px;height:1px;background:#FFFFFF;"></div>
<div style="left:530px;top:341px;width:1px;height:3px;background:#808080;"></div>
<div style="left:607px;top:341px;width:1px;height:4px;background:#FFFFFF;"></div>
<div style="left:606px;top:342px;width:1px;height:2px;background:#D4D0C8;"></div>
<div style="left:533px;top:351px;width:1px;height:3px;background:#000000;"></div>
<div style="left:538px;top:351px;width:1px;height:3px;background:#000000;"></div>
<div style="left:542px;top:351px;width:1px;height:3px;background:#000000;"></div>
<div style="left:547px;top:351px;width:1px;height:3px;background:#000000;"></div>
<div style="left:552px;top:351px;width:1px;height:3px;background:#000000;"></div>
<div style="left:557px;top:351px;width:1px;height:3px;background:#000000;"></div>
<div style="left:561px;top:351px;width:1px;height:3px;background:#000000;"></div>
<div style="left:566px;top:351px;width:1px;height:3px;background:#000000;"></div>
<div style="left:571px;top:351px;width:1px;height:3px;background:#000000;"></div>
<div style="left:576px;top:351px;width:1px;height:3px;background:#000000;"></div>
<div style="left:580px;top:351px;width:1px;height:3px;background:#000000;"></div>
<div style="left:585px;top:351px;width:1px;height:3px;background:#000000;"></div>
<div style="left:590px;top:351px;width:1px;height:3px;background:#000000;"></div>
<div style="left:595px;top:351px;width:1px;height:3px;background:#000000;"></div>
<div style="left:599px;top:351px;width:1px;height:3px;background:#000000;"></div>
<div style="left:604px;top:351px;width:1px;height:3px;background:#000000;"></div>
<svg style="left:558px;top:338px" width="7" height="12" viewBox="0 0 7 12" shape-rendering="crispEdges"><rect x="0" y="0" width="6" height="1" fill="#FFFFFF"/><rect x="6" y="0" width="1" height="1" fill="#404040"/><rect x="0" y="1" width="1" height="1" fill="#FFFFFF"/><rect x="1" y="1" width="4" height="1" fill="#D4D0C8"/><rect x="5" y="1" width="1" height="1" fill="#808080"/><rect x="6" y="1" width="1" height="1" fill="#404040"/><rect x="0" y="2" width="1" height="1" fill="#FFFFFF"/><rect x="1" y="2" width="4" height="1" fill="#D4D0C8"/><rect x="5" y="2" width="1" height="1" fill="#808080"/><rect x="6" y="2" width="1" height="1" fill="#404040"/><rect x="0" y="3" width="1" height="1" fill="#FFFFFF"/><rect x="1" y="3" width="4" height="1" fill="#D4D0C8"/><rect x="5" y="3" width="1" height="1" fill="#808080"/><rect x="6" y="3" width="1" height="1" fill="#404040"/><rect x="0" y="4" width="1" height="1" fill="#FFFFFF"/><rect x="1" y="4" width="4" height="1" fill="#D4D0C8"/><rect x="5" y="4" width="1" height="1" fill="#808080"/><rect x="6" y="4" width="1" height="1" fill="#404040"/><rect x="0" y="5" width="1" height="1" fill="#FFFFFF"/><rect x="1" y="5" width="4" height="1" fill="#D4D0C8"/><rect x="5" y="5" width="1" height="1" fill="#808080"/><rect x="6" y="5" width="1" height="1" fill="#404040"/><rect x="0" y="6" width="1" height="1" fill="#FFFFFF"/><rect x="1" y="6" width="4" height="1" fill="#D4D0C8"/><rect x="5" y="6" width="1" height="1" fill="#808080"/><rect x="6" y="6" width="1" height="1" fill="#404040"/><rect x="0" y="7" width="1" height="1" fill="#FFFFFF"/><rect x="1" y="7" width="4" height="1" fill="#D4D0C8"/><rect x="5" y="7" width="1" height="1" fill="#808080"/><rect x="6" y="7" width="1" height="1" fill="#404040"/><rect x="0" y="8" width="1" height="1" fill="#FFFFFF"/><rect x="1" y="8" width="5" height="1" fill="#D4D0C8"/><rect x="6" y="8" width="1" height="1" fill="#FFFFFF"/><rect x="1" y="9" width="1" height="1" fill="#FFFFFF"/><rect x="2" y="9" width="3" height="1" fill="#D4D0C8"/><rect x="5" y="9" width="1" height="1" fill="#FFFFFF"/><rect x="2" y="10" width="1" height="1" fill="#FFFFFF"/><rect x="3" y="10" width="1" height="1" fill="#404040"/><rect x="4" y="10" width="1" height="1" fill="#FFFFFF"/><rect x="3" y="11" width="1" height="1" fill="#404040"/></svg>
<div style="left:635px;top:302px;width:36px;height:1px;background:#808080;"></div>
<div style="left:635px;top:303px;width:35px;height:1px;background:#404040;"></div>
<div style="left:635px;top:304px;width:35px;height:1px;background:#D4D0C8;"></div>
<div style="left:635px;top:305px;width:36px;height:1px;background:#FFFFFF;"></div>
<div style="left:635px;top:302px;width:1px;height:3px;background:#808080;"></div>
<div style="left:670px;top:302px;width:1px;height:4px;background:#FFFFFF;"></div>
<div style="left:669px;top:303px;width:1px;height:2px;background:#D4D0C8;"></div>
<div style="left:638px;top:312px;width:1px;height:3px;background:#000000;"></div>
<div style="left:648px;top:312px;width:1px;height:3px;background:#000000;"></div>
<div style="left:657px;top:312px;width:1px;height:3px;background:#000000;"></div>
<div style="left:667px;top:312px;width:1px;height:3px;background:#000000;"></div>
<svg style="left:645px;top:299px" width="7" height="12" viewBox="0 0 7 12" shape-rendering="crispEdges"><rect x="0" y="0" width="6" height="1" fill="#FFFFFF"/><rect x="6" y="0" width="1" height="1" fill="#404040"/><rect x="0" y="1" width="1" height="1" fill="#FFFFFF"/><rect x="1" y="1" width="4" height="1" fill="#D4D0C8"/><rect x="5" y="1" width="1" height="1" fill="#808080"/><rect x="6" y="1" width="1" height="1" fill="#404040"/><rect x="0" y="2" width="1" height="1" fill="#FFFFFF"/><rect x="1" y="2" width="4" height="1" fill="#D4D0C8"/><rect x="5" y="2" width="1" height="1" fill="#808080"/><rect x="6" y="2" width="1" height="1" fill="#404040"/><rect x="0" y="3" width="1" height="1" fill="#FFFFFF"/><rect x="1" y="3" width="4" height="1" fill="#D4D0C8"/><rect x="5" y="3" width="1" height="1" fill="#808080"/><rect x="6" y="3" width="1" height="1" fill="#404040"/><rect x="0" y="4" width="1" height="1" fill="#FFFFFF"/><rect x="1" y="4" width="4" height="1" fill="#D4D0C8"/><rect x="5" y="4" width="1" height="1" fill="#808080"/><rect x="6" y="4" width="1" height="1" fill="#404040"/><rect x="0" y="5" width="1" height="1" fill="#FFFFFF"/><rect x="1" y="5" width="4" height="1" fill="#D4D0C8"/><rect x="5" y="5" width="1" height="1" fill="#808080"/><rect x="6" y="5" width="1" height="1" fill="#404040"/><rect x="0" y="6" width="1" height="1" fill="#FFFFFF"/><rect x="1" y="6" width="4" height="1" fill="#D4D0C8"/><rect x="5" y="6" width="1" height="1" fill="#808080"/><rect x="6" y="6" width="1" height="1" fill="#404040"/><rect x="0" y="7" width="1" height="1" fill="#FFFFFF"/><rect x="1" y="7" width="4" height="1" fill="#D4D0C8"/><rect x="5" y="7" width="1" height="1" fill="#808080"/><rect x="6" y="7" width="1" height="1" fill="#404040"/><rect x="0" y="8" width="1" height="1" fill="#FFFFFF"/><rect x="1" y="8" width="5" height="1" fill="#D4D0C8"/><rect x="6" y="8" width="1" height="1" fill="#FFFFFF"/><rect x="1" y="9" width="1" height="1" fill="#FFFFFF"/><rect x="2" y="9" width="3" height="1" fill="#D4D0C8"/><rect x="5" y="9" width="1" height="1" fill="#FFFFFF"/><rect x="2" y="10" width="1" height="1" fill="#FFFFFF"/><rect x="3" y="10" width="1" height="1" fill="#404040"/><rect x="4" y="10" width="1" height="1" fill="#FFFFFF"/><rect x="3" y="11" width="1" height="1" fill="#404040"/></svg>
<div style="left:635px;top:322px;width:36px;height:1px;background:#808080;"></div>
<div style="left:635px;top:323px;width:35px;height:1px;background:#404040;"></div>
<div style="left:635px;top:324px;width:35px;height:1px;background:#D4D0C8;"></div>
<div style="left:635px;top:325px;width:36px;height:1px;background:#FFFFFF;"></div>
<div style="left:635px;top:322px;width:1px;height:3px;background:#808080;"></div>
<div style="left:670px;top:322px;width:1px;height:4px;background:#FFFFFF;"></div>
<div style="left:669px;top:323px;width:1px;height:2px;background:#D4D0C8;"></div>
<div style="left:638px;top:332px;width:1px;height:3px;background:#000000;"></div>
<div style="left:648px;top:332px;width:1px;height:3px;background:#000000;"></div>
<div style="left:657px;top:332px;width:1px;height:3px;background:#000000;"></div>
<div style="left:667px;top:332px;width:1px;height:3px;background:#000000;"></div>
<svg style="left:664px;top:319px" width="7" height="12" viewBox="0 0 7 12" shape-rendering="crispEdges"><rect x="0" y="0" width="6" height="1" fill="#FFFFFF"/><rect x="6" y="0" width="1" height="1" fill="#404040"/><rect x="0" y="1" width="1" height="1" fill="#FFFFFF"/><rect x="1" y="1" width="4" height="1" fill="#D4D0C8"/><rect x="5" y="1" width="1" height="1" fill="#808080"/><rect x="6" y="1" width="1" height="1" fill="#404040"/><rect x="0" y="2" width="1" height="1" fill="#FFFFFF"/><rect x="1" y="2" width="4" height="1" fill="#D4D0C8"/><rect x="5" y="2" width="1" height="1" fill="#808080"/><rect x="6" y="2" width="1" height="1" fill="#404040"/><rect x="0" y="3" width="1" height="1" fill="#FFFFFF"/><rect x="1" y="3" width="4" height="1" fill="#D4D0C8"/><rect x="5" y="3" width="1" height="1" fill="#808080"/><rect x="6" y="3" width="1" height="1" fill="#404040"/><rect x="0" y="4" width="1" height="1" fill="#FFFFFF"/><rect x="1" y="4" width="4" height="1" fill="#D4D0C8"/><rect x="5" y="4" width="1" height="1" fill="#808080"/><rect x="6" y="4" width="1" height="1" fill="#404040"/><rect x="0" y="5" width="1" height="1" fill="#FFFFFF"/><rect x="1" y="5" width="4" height="1" fill="#D4D0C8"/><rect x="5" y="5" width="1" height="1" fill="#808080"/><rect x="6" y="5" width="1" height="1" fill="#404040"/><rect x="0" y="6" width="1" height="1" fill="#FFFFFF"/><rect x="1" y="6" width="4" height="1" fill="#D4D0C8"/><rect x="5" y="6" width="1" height="1" fill="#808080"/><rect x="6" y="6" width="1" height="1" fill="#404040"/><rect x="0" y="7" width="1" height="1" fill="#FFFFFF"/><rect x="1" y="7" width="4" height="1" fill="#D4D0C8"/><rect x="5" y="7" width="1" height="1" fill="#808080"/><rect x="6" y="7" width="1" height="1" fill="#404040"/><rect x="0" y="8" width="1" height="1" fill="#FFFFFF"/><rect x="1" y="8" width="5" height="1" fill="#D4D0C8"/><rect x="6" y="8" width="1" height="1" fill="#FFFFFF"/><rect x="1" y="9" width="1" height="1" fill="#FFFFFF"/><rect x="2" y="9" width="3" height="1" fill="#D4D0C8"/><rect x="5" y="9" width="1" height="1" fill="#FFFFFF"/><rect x="2" y="10" width="1" height="1" fill="#FFFFFF"/><rect x="3" y="10" width="1" height="1" fill="#404040"/><rect x="4" y="10" width="1" height="1" fill="#FFFFFF"/><rect x="3" y="11" width="1" height="1" fill="#404040"/></svg>
<div style="left:635px;top:341px;width:36px;height:1px;background:#808080;"></div>
<div style="left:635px;top:342px;width:35px;height:1px;background:#404040;"></div>
<div style="left:635px;top:343px;width:35px;height:1px;background:#D4D0C8;"></div>
<div style="left:635px;top:344px;width:36px;height:1px;background:#FFFFFF;"></div>
<div style="left:635px;top:341px;width:1px;height:3px;background:#808080;"></div>
<div style="left:670px;top:341px;width:1px;height:4px;background:#FFFFFF;"></div>
<div style="left:669px;top:342px;width:1px;height:2px;background:#D4D0C8;"></div>
<div style="left:638px;top:351px;width:1px;height:3px;background:#000000;"></div>
<div style="left:648px;top:351px;width:1px;height:3px;background:#000000;"></div>
<div style="left:657px;top:351px;width:1px;height:3px;background:#000000;"></div>
<div style="left:667px;top:351px;width:1px;height:3px;background:#000000;"></div>
<svg style="left:664px;top:338px" width="7" height="12" viewBox="0 0 7 12" shape-rendering="crispEdges"><rect x="0" y="0" width="6" height="1" fill="#FFFFFF"/><rect x="6" y="0" width="1" height="1" fill="#404040"/><rect x="0" y="1" width="1" height="1" fill="#FFFFFF"/><rect x="1" y="1" width="4" height="1" fill="#D4D0C8"/><rect x="5" y="1" width="1" height="1" fill="#808080"/><rect x="6" y="1" width="1" height="1" fill="#404040"/><rect x="0" y="2" width="1" height="1" fill="#FFFFFF"/><rect x="1" y="2" width="4" height="1" fill="#D4D0C8"/><rect x="5" y="2" width="1" height="1" fill="#808080"/><rect x="6" y="2" width="1" height="1" fill="#404040"/><rect x="0" y="3" width="1" height="1" fill="#FFFFFF"/><rect x="1" y="3" width="4" height="1" fill="#D4D0C8"/><rect x="5" y="3" width="1" height="1" fill="#808080"/><rect x="6" y="3" width="1" height="1" fill="#404040"/><rect x="0" y="4" width="1" height="1" fill="#FFFFFF"/><rect x="1" y="4" width="4" height="1" fill="#D4D0C8"/><rect x="5" y="4" width="1" height="1" fill="#808080"/><rect x="6" y="4" width="1" height="1" fill="#404040"/><rect x="0" y="5" width="1" height="1" fill="#FFFFFF"/><rect x="1" y="5" width="4" height="1" fill="#D4D0C8"/><rect x="5" y="5" width="1" height="1" fill="#808080"/><rect x="6" y="5" width="1" height="1" fill="#404040"/><rect x="0" y="6" width="1" height="1" fill="#FFFFFF"/><rect x="1" y="6" width="4" height="1" fill="#D4D0C8"/><rect x="5" y="6" width="1" height="1" fill="#808080"/><rect x="6" y="6" width="1" height="1" fill="#404040"/><rect x="0" y="7" width="1" height="1" fill="#FFFFFF"/><rect x="1" y="7" width="4" height="1" fill="#D4D0C8"/><rect x="5" y="7" width="1" height="1" fill="#808080"/><rect x="6" y="7" width="1" height="1" fill="#404040"/><rect x="0" y="8" width="1" height="1" fill="#FFFFFF"/><rect x="1" y="8" width="5" height="1" fill="#D4D0C8"/><rect x="6" y="8" width="1" height="1" fill="#FFFFFF"/><rect x="1" y="9" width="1" height="1" fill="#FFFFFF"/><rect x="2" y="9" width="3" height="1" fill="#D4D0C8"/><rect x="5" y="9" width="1" height="1" fill="#FFFFFF"/><rect x="2" y="10" width="1" height="1" fill="#FFFFFF"/><rect x="3" y="10" width="1" height="1" fill="#404040"/><rect x="4" y="10" width="1" height="1" fill="#FFFFFF"/><rect x="3" y="11" width="1" height="1" fill="#404040"/></svg>
<div style="left:431px;top:362px;width:243px;height:1px;background:#808080;"></div>
<div style="left:431px;top:363px;width:243px;height:1px;background:#FFFFFF;"></div>
<span class="t" style="top:372px;letter-spacing:-0.1px;right:188px;text-align:right;">3rd overtone:</span>
<span class="t" style="top:391px;letter-spacing:-0.08px;right:188px;text-align:right;">Inc. current at:</span>
<div style="left:515px;top:377px;width:93px;height:1px;background:#808080;"></div>
<div style="left:515px;top:378px;width:92px;height:1px;background:#404040;"></div>
<div style="left:515px;top:379px;width:92px;height:1px;background:#D4D0C8;"></div>
<div style="left:515px;top:380px;width:93px;height:1px;background:#FFFFFF;"></div>
<div style="left:515px;top:377px;width:1px;height:3px;background:#808080;"></div>
<div style="left:607px;top:377px;width:1px;height:4px;background:#FFFFFF;"></div>
<div style="left:606px;top:378px;width:1px;height:2px;background:#D4D0C8;"></div>
<div style="left:518px;top:387px;width:1px;height:3px;background:#000000;"></div>
<div style="left:520px;top:387px;width:1px;height:3px;background:#000000;"></div>
<div style="left:522px;top:387px;width:1px;height:3px;background:#000000;"></div>
<div style="left:524px;top:387px;width:1px;height:3px;background:#000000;"></div>
<div style="left:527px;top:387px;width:1px;height:3px;background:#000000;"></div>
<div style="left:529px;top:387px;width:1px;height:3px;background:#000000;"></div>
<div style="left:531px;top:387px;width:1px;height:3px;background:#000000;"></div>
<div style="left:533px;top:387px;width:1px;height:3px;background:#000000;"></div>
<div style="left:535px;top:387px;width:1px;height:3px;background:#000000;"></div>
<div style="left:537px;top:387px;width:1px;height:3px;background:#000000;"></div>
<div style="left:540px;top:387px;width:1px;height:3px;background:#000000;"></div>
<div style="left:542px;top:387px;width:1px;height:3px;background:#000000;"></div>
<div style="left:544px;top:387px;width:1px;height:3px;background:#000000;"></div>
<div style="left:546px;top:387px;width:1px;height:3px;background:#000000;"></div>
<div style="left:548px;top:387px;width:1px;height:3px;background:#000000;"></div>
<div style="left:550px;top:387px;width:1px;height:3px;background:#000000;"></div>
<div style="left:552px;top:387px;width:1px;height:3px;background:#000000;"></div>
<div style="left:555px;top:387px;width:1px;height:3px;background:#000000;"></div>
<div style="left:557px;top:387px;width:1px;height:3px;background:#000000;"></div>
<div style="left:559px;top:387px;width:1px;height:3px;background:#000000;"></div>
<div style="left:561px;top:387px;width:1px;height:3px;background:#000000;"></div>
<div style="left:563px;top:387px;width:1px;height:3px;background:#000000;"></div>
<div style="left:565px;top:387px;width:1px;height:3px;background:#000000;"></div>
<div style="left:567px;top:387px;width:1px;height:3px;background:#000000;"></div>
<div style="left:570px;top:387px;width:1px;height:3px;background:#000000;"></div>
<div style="left:572px;top:387px;width:1px;height:3px;background:#000000;"></div>
<div style="left:574px;top:387px;width:1px;height:3px;background:#000000;"></div>
<div style="left:576px;top:387px;width:1px;height:3px;background:#000000;"></div>
<div style="left:578px;top:387px;width:1px;height:3px;background:#000000;"></div>
<div style="left:580px;top:387px;width:1px;height:3px;background:#000000;"></div>
<div style="left:583px;top:387px;width:1px;height:3px;background:#000000;"></div>
<div style="left:585px;top:387px;width:1px;height:3px;background:#000000;"></div>
<div style="left:587px;top:387px;width:1px;height:3px;background:#000000;"></div>
<div style="left:589px;top:387px;width:1px;height:3px;background:#000000;"></div>
<div style="left:591px;top:387px;width:1px;height:3px;background:#000000;"></div>
<div style="left:593px;top:387px;width:1px;height:3px;background:#000000;"></div>
<div style="left:595px;top:387px;width:1px;height:3px;background:#000000;"></div>
<div style="left:598px;top:387px;width:1px;height:3px;background:#000000;"></div>
<div style="left:600px;top:387px;width:1px;height:3px;background:#000000;"></div>
<div style="left:602px;top:387px;width:1px;height:3px;background:#000000;"></div>
<div style="left:604px;top:387px;width:1px;height:3px;background:#000000;"></div>
<svg style="left:560px;top:374px" width="7" height="12" viewBox="0 0 7 12" shape-rendering="crispEdges"><rect x="0" y="0" width="6" height="1" fill="#FFFFFF"/><rect x="6" y="0" width="1" height="1" fill="#404040"/><rect x="0" y="1" width="1" height="1" fill="#FFFFFF"/><rect x="1" y="1" width="4" height="1" fill="#D4D0C8"/><rect x="5" y="1" width="1" height="1" fill="#808080"/><rect x="6" y="1" width="1" height="1" fill="#404040"/><rect x="0" y="2" width="1" height="1" fill="#FFFFFF"/><rect x="1" y="2" width="4" height="1" fill="#D4D0C8"/><rect x="5" y="2" width="1" height="1" fill="#808080"/><rect x="6" y="2" width="1" height="1" fill="#404040"/><rect x="0" y="3" width="1" height="1" fill="#FFFFFF"/><rect x="1" y="3" width="4" height="1" fill="#D4D0C8"/><rect x="5" y="3" width="1" height="1" fill="#808080"/><rect x="6" y="3" width="1" height="1" fill="#404040"/><rect x="0" y="4" width="1" height="1" fill="#FFFFFF"/><rect x="1" y="4" width="4" height="1" fill="#D4D0C8"/><rect x="5" y="4" width="1" height="1" fill="#808080"/><rect x="6" y="4" width="1" height="1" fill="#404040"/><rect x="0" y="5" width="1" height="1" fill="#FFFFFF"/><rect x="1" y="5" width="4" height="1" fill="#D4D0C8"/><rect x="5" y="5" width="1" height="1" fill="#808080"/><rect x="6" y="5" width="1" height="1" fill="#404040"/><rect x="0" y="6" width="1" height="1" fill="#FFFFFF"/><rect x="1" y="6" width="4" height="1" fill="#D4D0C8"/><rect x="5" y="6" width="1" height="1" fill="#808080"/><rect x="6" y="6" width="1" height="1" fill="#404040"/><rect x="0" y="7" width="1" height="1" fill="#FFFFFF"/><rect x="1" y="7" width="4" height="1" fill="#D4D0C8"/><rect x="5" y="7" width="1" height="1" fill="#808080"/><rect x="6" y="7" width="1" height="1" fill="#404040"/><rect x="0" y="8" width="1" height="1" fill="#FFFFFF"/><rect x="1" y="8" width="5" height="1" fill="#D4D0C8"/><rect x="6" y="8" width="1" height="1" fill="#FFFFFF"/><rect x="1" y="9" width="1" height="1" fill="#FFFFFF"/><rect x="2" y="9" width="3" height="1" fill="#D4D0C8"/><rect x="5" y="9" width="1" height="1" fill="#FFFFFF"/><rect x="2" y="10" width="1" height="1" fill="#FFFFFF"/><rect x="3" y="10" width="1" height="1" fill="#404040"/><rect x="4" y="10" width="1" height="1" fill="#FFFFFF"/><rect x="3" y="11" width="1" height="1" fill="#404040"/></svg>
<div style="left:515px;top:396px;width:93px;height:1px;background:#808080;"></div>
<div style="left:515px;top:397px;width:92px;height:1px;background:#404040;"></div>
<div style="left:515px;top:398px;width:92px;height:1px;background:#D4D0C8;"></div>
<div style="left:515px;top:399px;width:93px;height:1px;background:#FFFFFF;"></div>
<div style="left:515px;top:396px;width:1px;height:3px;background:#808080;"></div>
<div style="left:607px;top:396px;width:1px;height:4px;background:#FFFFFF;"></div>
<div style="left:606px;top:397px;width:1px;height:2px;background:#D4D0C8;"></div>
<div style="left:518px;top:406px;width:1px;height:3px;background:#000000;"></div>
<div style="left:521px;top:406px;width:1px;height:3px;background:#000000;"></div>
<div style="left:524px;top:406px;width:1px;height:3px;background:#000000;"></div>
<div style="left:526px;top:406px;width:1px;height:3px;background:#000000;"></div>
<div style="left:529px;top:406px;width:1px;height:3px;background:#000000;"></div>
<div style="left:532px;top:406px;width:1px;height:3px;background:#000000;"></div>
<div style="left:535px;top:406px;width:1px;height:3px;background:#000000;"></div>
<div style="left:537px;top:406px;width:1px;height:3px;background:#000000;"></div>
<div style="left:540px;top:406px;width:1px;height:3px;background:#000000;"></div>
<div style="left:543px;top:406px;width:1px;height:3px;background:#000000;"></div>
<div style="left:546px;top:406px;width:1px;height:3px;background:#000000;"></div>
<div style="left:549px;top:406px;width:1px;height:3px;background:#000000;"></div>
<div style="left:551px;top:406px;width:1px;height:3px;background:#000000;"></div>
<div style="left:554px;top:406px;width:1px;height:3px;background:#000000;"></div>
<div style="left:557px;top:406px;width:1px;height:3px;background:#000000;"></div>
<div style="left:560px;top:406px;width:1px;height:3px;background:#000000;"></div>
<div style="left:562px;top:406px;width:1px;height:3px;background:#000000;"></div>
<div style="left:565px;top:406px;width:1px;height:3px;background:#000000;"></div>
<div style="left:568px;top:406px;width:1px;height:3px;background:#000000;"></div>
<div style="left:571px;top:406px;width:1px;height:3px;background:#000000;"></div>
<div style="left:573px;top:406px;width:1px;height:3px;background:#000000;"></div>
<div style="left:576px;top:406px;width:1px;height:3px;background:#000000;"></div>
<div style="left:579px;top:406px;width:1px;height:3px;background:#000000;"></div>
<div style="left:582px;top:406px;width:1px;height:3px;background:#000000;"></div>
<div style="left:585px;top:406px;width:1px;height:3px;background:#000000;"></div>
<div style="left:587px;top:406px;width:1px;height:3px;background:#000000;"></div>
<div style="left:590px;top:406px;width:1px;height:3px;background:#000000;"></div>
<div style="left:593px;top:406px;width:1px;height:3px;background:#000000;"></div>
<div style="left:596px;top:406px;width:1px;height:3px;background:#000000;"></div>
<div style="left:598px;top:406px;width:1px;height:3px;background:#000000;"></div>
<div style="left:601px;top:406px;width:1px;height:3px;background:#000000;"></div>
<div style="left:604px;top:406px;width:1px;height:3px;background:#000000;"></div>
<svg style="left:532px;top:393px" width="7" height="12" viewBox="0 0 7 12" shape-rendering="crispEdges"><rect x="0" y="0" width="6" height="1" fill="#FFFFFF"/><rect x="6" y="0" width="1" height="1" fill="#404040"/><rect x="0" y="1" width="1" height="1" fill="#FFFFFF"/><rect x="1" y="1" width="4" height="1" fill="#D4D0C8"/><rect x="5" y="1" width="1" height="1" fill="#808080"/><rect x="6" y="1" width="1" height="1" fill="#404040"/><rect x="0" y="2" width="1" height="1" fill="#FFFFFF"/><rect x="1" y="2" width="4" height="1" fill="#D4D0C8"/><rect x="5" y="2" width="1" height="1" fill="#808080"/><rect x="6" y="2" width="1" height="1" fill="#404040"/><rect x="0" y="3" width="1" height="1" fill="#FFFFFF"/><rect x="1" y="3" width="4" height="1" fill="#D4D0C8"/><rect x="5" y="3" width="1" height="1" fill="#808080"/><rect x="6" y="3" width="1" height="1" fill="#404040"/><rect x="0" y="4" width="1" height="1" fill="#FFFFFF"/><rect x="1" y="4" width="4" height="1" fill="#D4D0C8"/><rect x="5" y="4" width="1" height="1" fill="#808080"/><rect x="6" y="4" width="1" height="1" fill="#404040"/><rect x="0" y="5" width="1" height="1" fill="#FFFFFF"/><rect x="1" y="5" width="4" height="1" fill="#D4D0C8"/><rect x="5" y="5" width="1" height="1" fill="#808080"/><rect x="6" y="5" width="1" height="1" fill="#404040"/><rect x="0" y="6" width="1" height="1" fill="#FFFFFF"/><rect x="1" y="6" width="4" height="1" fill="#D4D0C8"/><rect x="5" y="6" width="1" height="1" fill="#808080"/><rect x="6" y="6" width="1" height="1" fill="#404040"/><rect x="0" y="7" width="1" height="1" fill="#FFFFFF"/><rect x="1" y="7" width="4" height="1" fill="#D4D0C8"/><rect x="5" y="7" width="1" height="1" fill="#808080"/><rect x="6" y="7" width="1" height="1" fill="#404040"/><rect x="0" y="8" width="1" height="1" fill="#FFFFFF"/><rect x="1" y="8" width="5" height="1" fill="#D4D0C8"/><rect x="6" y="8" width="1" height="1" fill="#FFFFFF"/><rect x="1" y="9" width="1" height="1" fill="#FFFFFF"/><rect x="2" y="9" width="3" height="1" fill="#D4D0C8"/><rect x="5" y="9" width="1" height="1" fill="#FFFFFF"/><rect x="2" y="10" width="1" height="1" fill="#FFFFFF"/><rect x="3" y="10" width="1" height="1" fill="#404040"/><rect x="4" y="10" width="1" height="1" fill="#FFFFFF"/><rect x="3" y="11" width="1" height="1" fill="#404040"/></svg>
<div class="sunk" style="left:617px;top:372px;width:54px;height:19px;background-color:#FFFFFF;"><span style="letter-spacing:-0.1px;position:relative;top:0px">0</span></div>
<div class="sunk" style="left:617px;top:391px;width:54px;height:20px;background-color:#FFFFFF;"><span style="letter-spacing:-0.1px;position:relative;top:-1px">50</span></div>
<div style="left:431px;top:417px;width:243px;height:1px;background:#808080;"></div>
<div style="left:431px;top:418px;width:243px;height:1px;background:#FFFFFF;"></div>
<span class="t" style="top:424px;letter-spacing:-0.23px;left:430px;">Guiding corrections: (% of the sidereal speed)</span>
<div style="left:452px;top:445px;width:203px;height:1px;background:#808080;"></div>
<div style="left:452px;top:446px;width:202px;height:1px;background:#404040;"></div>
<div style="left:452px;top:447px;width:202px;height:1px;background:#D4D0C8;"></div>
<div style="left:452px;top:448px;width:203px;height:1px;background:#FFFFFF;"></div>
<div style="left:452px;top:445px;width:1px;height:3px;background:#808080;"></div>
<div style="left:654px;top:445px;width:1px;height:4px;background:#FFFFFF;"></div>
<div style="left:653px;top:446px;width:1px;height:2px;background:#D4D0C8;"></div>
<div style="left:455px;top:455px;width:1px;height:3px;background:#000000;"></div>
<div style="left:463px;top:455px;width:1px;height:3px;background:#000000;"></div>
<div style="left:471px;top:455px;width:1px;height:3px;background:#000000;"></div>
<div style="left:480px;top:455px;width:1px;height:3px;background:#000000;"></div>
<div style="left:488px;top:455px;width:1px;height:3px;background:#000000;"></div>
<div style="left:496px;top:455px;width:1px;height:3px;background:#000000;"></div>
<div style="left:504px;top:455px;width:1px;height:3px;background:#000000;"></div>
<div style="left:512px;top:455px;width:1px;height:3px;background:#000000;"></div>
<div style="left:521px;top:455px;width:1px;height:3px;background:#000000;"></div>
<div style="left:529px;top:455px;width:1px;height:3px;background:#000000;"></div>
<div style="left:537px;top:455px;width:1px;height:3px;background:#000000;"></div>
<div style="left:545px;top:455px;width:1px;height:3px;background:#000000;"></div>
<div style="left:554px;top:455px;width:1px;height:3px;background:#000000;"></div>
<div style="left:562px;top:455px;width:1px;height:3px;background:#000000;"></div>
<div style="left:570px;top:455px;width:1px;height:3px;background:#000000;"></div>
<div style="left:578px;top:455px;width:1px;height:3px;background:#000000;"></div>
<div style="left:586px;top:455px;width:1px;height:3px;background:#000000;"></div>
<div style="left:595px;top:455px;width:1px;height:3px;background:#000000;"></div>
<div style="left:603px;top:455px;width:1px;height:3px;background:#000000;"></div>
<div style="left:611px;top:455px;width:1px;height:3px;background:#000000;"></div>
<div style="left:619px;top:455px;width:1px;height:3px;background:#000000;"></div>
<div style="left:627px;top:455px;width:1px;height:3px;background:#000000;"></div>
<div style="left:636px;top:455px;width:1px;height:3px;background:#000000;"></div>
<div style="left:644px;top:455px;width:1px;height:3px;background:#000000;"></div>
<div style="left:652px;top:455px;width:1px;height:3px;background:#000000;"></div>
<svg style="left:468px;top:442px" width="7" height="12" viewBox="0 0 7 12" shape-rendering="crispEdges"><rect x="0" y="0" width="6" height="1" fill="#FFFFFF"/><rect x="6" y="0" width="1" height="1" fill="#404040"/><rect x="0" y="1" width="1" height="1" fill="#FFFFFF"/><rect x="1" y="1" width="4" height="1" fill="#D4D0C8"/><rect x="5" y="1" width="1" height="1" fill="#808080"/><rect x="6" y="1" width="1" height="1" fill="#404040"/><rect x="0" y="2" width="1" height="1" fill="#FFFFFF"/><rect x="1" y="2" width="4" height="1" fill="#D4D0C8"/><rect x="5" y="2" width="1" height="1" fill="#808080"/><rect x="6" y="2" width="1" height="1" fill="#404040"/><rect x="0" y="3" width="1" height="1" fill="#FFFFFF"/><rect x="1" y="3" width="4" height="1" fill="#D4D0C8"/><rect x="5" y="3" width="1" height="1" fill="#808080"/><rect x="6" y="3" width="1" height="1" fill="#404040"/><rect x="0" y="4" width="1" height="1" fill="#FFFFFF"/><rect x="1" y="4" width="4" height="1" fill="#D4D0C8"/><rect x="5" y="4" width="1" height="1" fill="#808080"/><rect x="6" y="4" width="1" height="1" fill="#404040"/><rect x="0" y="5" width="1" height="1" fill="#FFFFFF"/><rect x="1" y="5" width="4" height="1" fill="#D4D0C8"/><rect x="5" y="5" width="1" height="1" fill="#808080"/><rect x="6" y="5" width="1" height="1" fill="#404040"/><rect x="0" y="6" width="1" height="1" fill="#FFFFFF"/><rect x="1" y="6" width="4" height="1" fill="#D4D0C8"/><rect x="5" y="6" width="1" height="1" fill="#808080"/><rect x="6" y="6" width="1" height="1" fill="#404040"/><rect x="0" y="7" width="1" height="1" fill="#FFFFFF"/><rect x="1" y="7" width="4" height="1" fill="#D4D0C8"/><rect x="5" y="7" width="1" height="1" fill="#808080"/><rect x="6" y="7" width="1" height="1" fill="#404040"/><rect x="0" y="8" width="1" height="1" fill="#FFFFFF"/><rect x="1" y="8" width="5" height="1" fill="#D4D0C8"/><rect x="6" y="8" width="1" height="1" fill="#FFFFFF"/><rect x="1" y="9" width="1" height="1" fill="#FFFFFF"/><rect x="2" y="9" width="3" height="1" fill="#D4D0C8"/><rect x="5" y="9" width="1" height="1" fill="#FFFFFF"/><rect x="2" y="10" width="1" height="1" fill="#FFFFFF"/><rect x="3" y="10" width="1" height="1" fill="#404040"/><rect x="4" y="10" width="1" height="1" fill="#FFFFFF"/><rect x="3" y="11" width="1" height="1" fill="#404040"/></svg>
<span class="t" style="top:461px;letter-spacing:-0.9px;left:355px;width:200px;text-align:center;">25%</span>
<span class="t" style="top:461px;letter-spacing:-0.9px;left:388px;width:200px;text-align:center;">50%</span>
<span class="t" style="top:461px;letter-spacing:-0.9px;left:421px;width:200px;text-align:center;">75%</span>
<span class="t" style="top:461px;letter-spacing:-0.9px;left:454px;width:200px;text-align:center;">100%</span>
<span class="t" style="top:461px;letter-spacing:-0.9px;left:487px;width:200px;text-align:center;">125%</span>
<span class="t" style="top:461px;letter-spacing:-0.9px;left:520px;width:200px;text-align:center;">150%</span>
<span class="t" style="top:461px;letter-spacing:-0.9px;left:553px;width:200px;text-align:center;">175%</span>
</div></body></html>
